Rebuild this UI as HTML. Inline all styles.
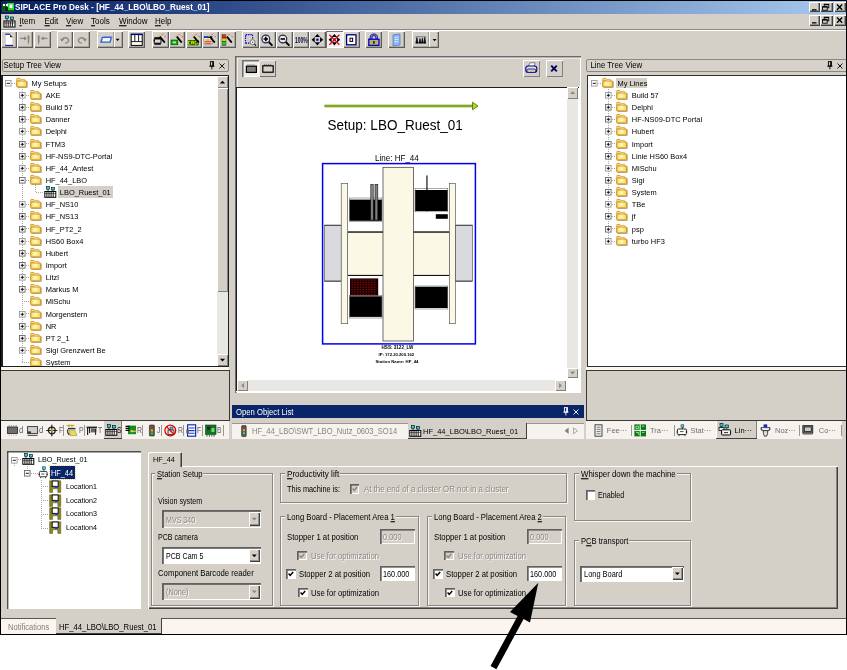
<!DOCTYPE html>
<html lang="en"><head><meta charset="utf-8"><title>SIPLACE Pro Desk</title><style>
html,body{margin:0;padding:0;background:#fff}
body{width:847px;height:670px;position:relative;overflow:hidden;font-family:"Liberation Sans",sans-serif}
#w div,#w span,#w svg{position:absolute;display:block}
#w span{white-space:nowrap}
#w svg{overflow:visible}
#w{will-change:transform;position:absolute;left:0;top:0;width:847px;height:670px}
u{text-decoration:underline;text-decoration-thickness:0.7px;text-underline-offset:1px}
</style></head><body><div id="w">
<div style="left:0px;top:0px;width:847px;height:635px;background:#000"></div>
<div style="left:1px;top:1px;width:845px;height:633px;background:#D4D0C8"></div>
<div style="left:1px;top:1px;width:845px;height:13px;background:linear-gradient(90deg,#0A246A 0%,#0A246A 4%,#A6CAF0 100%)"></div>
<svg style="left:2px;top:2px" width="12" height="11" viewBox="0 0 12 11"><rect x="0" y="2" width="12" height="8" fill="#0a5a2a"/><rect x="5" y="1" width="7" height="7" fill="#20e020"/><rect x="7.5" y="2.5" width="3" height="3.5" fill="#fff"/><rect x="1" y="2" width="2" height="2" fill="#fff"/><rect x="4" y="2" width="2" height="2" fill="#fff"/><rect x="3" y="5" width="3" height="4" fill="#222"/></svg>
<span style="left:15px;top:2.9px;font-size:8.25px;line-height:10px;color:#fff;font-weight:bold;transform:scaleY(1.08);transform-origin:0 55%">SIPLACE Pro Desk - [HF_44_LBO\LBO_Ruest_01]</span>
<div style="left:808.6px;top:1.5px;width:11.4px;height:10.6px;background:#D4D0C8;box-shadow:inset 1px 1px 0 #fff,inset -1px -1px 0 #404040,inset -2px -2px 0 #909090;"></div>
<svg style="left:808.6px;top:1.5px" width="11.5" height="10.5" viewBox="0 0 11.5 10.5"><rect x="3" y="7.2" width="4.5" height="1.3" fill="#000"/></svg>
<div style="left:820.4px;top:1.5px;width:12.2px;height:10.6px;background:#D4D0C8;box-shadow:inset 1px 1px 0 #fff,inset -1px -1px 0 #404040,inset -2px -2px 0 #909090;"></div>
<svg style="left:820.4px;top:1.5px" width="11.5" height="10.5" viewBox="0 0 11.5 10.5"><rect x="4.2" y="2.2" width="4.6" height="3.6" fill="none" stroke="#000" stroke-width="0.9"/><rect x="4.2" y="2" width="4.6" height="1.2" fill="#000"/><rect x="2.6" y="4.6" width="4.6" height="3.6" fill="#D4D0C8" stroke="#000" stroke-width="0.9"/><rect x="2.6" y="4.4" width="4.6" height="1.2" fill="#000"/></svg>
<div style="left:833.6px;top:1.5px;width:12px;height:10.6px;background:#D4D0C8;box-shadow:inset 1px 1px 0 #fff,inset -1px -1px 0 #404040,inset -2px -2px 0 #909090;"></div>
<svg style="left:833.6px;top:1.5px" width="11.5" height="10.5" viewBox="0 0 11.5 10.5"><path d="M3 2.6 L8.2 7.8 M8.2 2.6 L3 7.8" stroke="#000" stroke-width="1.4"/></svg>
<div style="left:808.6px;top:15.3px;width:11.4px;height:10.6px;background:#D4D0C8;box-shadow:inset 1px 1px 0 #fff,inset -1px -1px 0 #404040,inset -2px -2px 0 #909090;"></div>
<svg style="left:808.6px;top:15.3px" width="11.5" height="10.5" viewBox="0 0 11.5 10.5"><rect x="3" y="7.2" width="4.5" height="1.3" fill="#000"/></svg>
<div style="left:820.4px;top:15.3px;width:12.2px;height:10.6px;background:#D4D0C8;box-shadow:inset 1px 1px 0 #fff,inset -1px -1px 0 #404040,inset -2px -2px 0 #909090;"></div>
<svg style="left:820.4px;top:15.3px" width="11.5" height="10.5" viewBox="0 0 11.5 10.5"><rect x="4.2" y="2.2" width="4.6" height="3.6" fill="none" stroke="#000" stroke-width="0.9"/><rect x="4.2" y="2" width="4.6" height="1.2" fill="#000"/><rect x="2.6" y="4.6" width="4.6" height="3.6" fill="#D4D0C8" stroke="#000" stroke-width="0.9"/><rect x="2.6" y="4.4" width="4.6" height="1.2" fill="#000"/></svg>
<div style="left:833.6px;top:15.3px;width:12px;height:10.6px;background:#D4D0C8;box-shadow:inset 1px 1px 0 #fff,inset -1px -1px 0 #404040,inset -2px -2px 0 #909090;"></div>
<svg style="left:833.6px;top:15.3px" width="11.5" height="10.5" viewBox="0 0 11.5 10.5"><path d="M3 2.6 L8.2 7.8 M8.2 2.6 L3 7.8" stroke="#000" stroke-width="1.4"/></svg>
<svg style="left:3px;top:15px" width="13" height="13" viewBox="0 0 13 13"><rect x="2.5" y="1" width="3" height="2.6" fill="#20d8e8" stroke="#000" stroke-width="0.6"/><rect x="7.5" y="2" width="3" height="2.6" fill="#20d8e8" stroke="#000" stroke-width="0.6"/><path d="M4 3.6V6M9 4.6V6" stroke="#000" stroke-width="0.7"/><rect x="1" y="6" width="11" height="6" fill="#fff" stroke="#000" stroke-width="1"/><path d="M3.1 6.4v5.2M5.2 6.4v5.2M7.3 6.4v5.2M9.4 6.4v5.2" stroke="#000" stroke-width="0.9"/><path d="M1 8h11" stroke="#000" stroke-width="0.5"/></svg>
<span style="left:19.5px;top:17px;font-size:8px;line-height:10px;color:#000;;transform:scaleY(1.08);transform-origin:0 55%"><u>I</u>tem</span>
<span style="left:44.5px;top:17px;font-size:8px;line-height:10px;color:#000;;transform:scaleY(1.08);transform-origin:0 55%"><u>E</u>dit</span>
<span style="left:66px;top:17px;font-size:8px;line-height:10px;color:#000;;transform:scaleY(1.08);transform-origin:0 55%"><u>V</u>iew</span>
<span style="left:91px;top:17px;font-size:8px;line-height:10px;color:#000;;transform:scaleY(1.08);transform-origin:0 55%"><u>T</u>ools</span>
<span style="left:119px;top:17px;font-size:8px;line-height:10px;color:#000;;transform:scaleY(1.08);transform-origin:0 55%"><u>W</u>indow</span>
<span style="left:155px;top:17px;font-size:8px;line-height:10px;color:#000;;transform:scaleY(1.08);transform-origin:0 55%"><u>H</u>elp</span>
<div style="left:1px;top:29px;width:845px;height:1px;background:#8c8a84"></div>
<div style="left:1px;top:30px;width:845px;height:1px;background:#fff"></div>
<div style="left:0.8px;top:31.3px;width:16px;height:17px;background:#D4D0C8;box-shadow:inset 1px 1px 0 #fff,inset -1px -1px 0 #5a5a5a,inset -1.7px -1.7px 0 #a09c94"></div>
<svg style="left:0.8px;top:31.3px" width="16" height="17" viewBox="0 0 16 17"><path d="M4.4 3.4h4.6l2.8 2.8v8h-7.4z" fill="#fff" stroke="#bbb" stroke-width="0.5"/><path d="M9 3.4v2.8h2.8z" fill="#223"/><path d="M4.2 3.2h5" stroke="#0000a0" stroke-width="1"/><path d="M4.2 14.4h7.8" stroke="#0000a0" stroke-width="1"/></svg>
<div style="left:16.9px;top:31.3px;width:16.4px;height:17px;background:#D4D0C8;box-shadow:inset 1px 1px 0 #fff,inset -1px -1px 0 #5a5a5a,inset -1.7px -1.7px 0 #a09c94"></div>
<svg style="left:16.9px;top:31.3px" width="16.4" height="17" viewBox="0 0 16.4 17"><path d="M3.2 7.4h4.4" stroke="#8a8782" stroke-width="1.3"/><path d="M7 5.2L10 7.4L7 9.6z" fill="#8a8782"/><path d="M10.4 4.6h2v6l-0.8 3h-0.6z" fill="#8a8782"/></svg>
<div style="left:33.6px;top:31.3px;width:17px;height:17px;background:#D4D0C8;box-shadow:inset 1px 1px 0 #fff,inset -1px -1px 0 #5a5a5a,inset -1.7px -1.7px 0 #a09c94"></div>
<svg style="left:33.6px;top:31.3px" width="17" height="17" viewBox="0 0 17 17"><path d="M3.6 4.6h2v6l-0.8 3h-0.6z" fill="#8a8782"/><path d="M13.4 7.4H9" stroke="#8a8782" stroke-width="1.3"/><path d="M9.6 5.2L6.6 7.4L9.6 9.6z" fill="#8a8782"/></svg>
<div style="left:56.6px;top:31.3px;width:16.4px;height:17px;background:#D4D0C8;box-shadow:inset 1px 1px 0 #fff,inset -1px -1px 0 #5a5a5a,inset -1.7px -1.7px 0 #a09c94"></div>
<svg style="left:56.6px;top:31.3px" width="16.4" height="17" viewBox="0 0 16.4 17"><path d="M5 9.6a3.3 2.6 0 1 1 3.3 2.4" stroke="#8a8782" stroke-width="1.4" fill="none"/><path d="M3 7.4L4.8 10.8L7.2 8.2z" fill="#8a8782"/></svg>
<div style="left:73.3px;top:31.3px;width:16.8px;height:17px;background:#D4D0C8;box-shadow:inset 1px 1px 0 #fff,inset -1px -1px 0 #5a5a5a,inset -1.7px -1.7px 0 #a09c94"></div>
<svg style="left:73.3px;top:31.3px" width="16.8" height="17" viewBox="0 0 16.8 17"><path d="M12 9.6a3.3 2.6 0 1 0 -3.3 2.4" stroke="#8a8782" stroke-width="1.4" fill="none"/><path d="M14 7.4L12.2 10.8L9.8 8.2z" fill="#8a8782"/></svg>
<div style="left:96.8px;top:31.3px;width:25.8px;height:17px;background:#D4D0C8;box-shadow:inset 1px 1px 0 #fff,inset -1px -1px 0 #5a5a5a,inset -1.7px -1.7px 0 #a09c94"></div>
<div style="left:113.5px;top:32.3px;width:1px;height:15px;background:#fff"></div>
<div style="left:112.7px;top:32.3px;width:0.8px;height:15px;background:#a09c94"></div>
<svg style="left:96.8px;top:31.3px" width="25.8" height="17" viewBox="0 0 25.8 17"><path d="M5.4 6.4h9l-1.4 4.8h-9z" fill="#f4f6ff" stroke="#2a5ad0" stroke-width="1.3"/><path d="M7 5.6h8l-0.4 1.4" fill="none" stroke="#7a9ae8" stroke-width="0.9"/><path d="M18.6 7.8h4l-2 2.2z" fill="#000"/></svg>
<div style="left:128.4px;top:31.3px;width:17px;height:17px;background:#D4D0C8;box-shadow:inset 1px 1px 0 #fff,inset -1px -1px 0 #5a5a5a,inset -1.7px -1.7px 0 #a09c94"></div>
<svg style="left:128.4px;top:31.3px" width="17" height="17" viewBox="0 0 17 17"><rect x="3.2" y="3.4" width="11" height="11" fill="#fff" stroke="#000" stroke-width="1"/><rect x="2.7" y="2.6" width="12" height="1.5" fill="#000080"/><path d="M6.8 4v6.4M10.6 4v6.4M3.2 10.6h11" stroke="#000" stroke-width="0.9"/></svg>
<div style="left:151.8px;top:31.3px;width:16.85px;height:17px;background:#D4D0C8;box-shadow:inset 1px 1px 0 #fff,inset -1px -1px 0 #5a5a5a,inset -1.7px -1.7px 0 #a09c94"></div>
<svg style="left:151.8px;top:31.3px" width="16.85" height="17" viewBox="0 0 16.85 17"><rect x="2.4" y="6.2" width="6.4" height="1.8" fill="#000"/><path d="M2.2 8h6.8v4.2h-6.8z" fill="#d8d8d8" stroke="#000" stroke-width="0.9"/><path d="M1.8 9.4h1M2.4 13h6.4" stroke="#000" stroke-width="1.5"/><path d="M7.6 5.4L12.8 11.6" stroke="#000" stroke-width="1.7"/><path d="M6.8 4.4L7.8 5.6" stroke="#d8c800" stroke-width="1.5"/><circle cx="10" cy="3.6" r="0.55" fill="#e02020"/><circle cx="11.8" cy="2.6" r="0.45" fill="#e05050"/><circle cx="13.2" cy="5.8" r="0.55" fill="#e02020"/><circle cx="12" cy="4.4" r="0.45" fill="#e06060"/><circle cx="14" cy="3.4" r="0.4" fill="#e08080"/></svg>
<div style="left:168.65px;top:31.3px;width:16.85px;height:17px;background:#D4D0C8;box-shadow:inset 1px 1px 0 #fff,inset -1px -1px 0 #5a5a5a,inset -1.7px -1.7px 0 #a09c94"></div>
<svg style="left:168.65px;top:31.3px" width="16.85" height="17" viewBox="0 0 16.85 17"><rect x="2" y="9" width="6.8" height="4.8" fill="#00b400" stroke="#003c00" stroke-width="0.6"/><rect x="3.6" y="10.4" width="3.4" height="2" fill="#9ae89a"/><path d="M7.6 5.4L12.8 11.6" stroke="#000" stroke-width="1.7"/><path d="M6.8 4.4L7.8 5.6" stroke="#d8c800" stroke-width="1.5"/><circle cx="10" cy="3.6" r="0.55" fill="#e02020"/><circle cx="11.8" cy="2.6" r="0.45" fill="#e05050"/><circle cx="13.2" cy="5.8" r="0.55" fill="#e02020"/><circle cx="12" cy="4.4" r="0.45" fill="#e06060"/><circle cx="14" cy="3.4" r="0.4" fill="#e08080"/></svg>
<div style="left:185.5px;top:31.3px;width:16.85px;height:17px;background:#D4D0C8;box-shadow:inset 1px 1px 0 #fff,inset -1px -1px 0 #5a5a5a,inset -1.7px -1.7px 0 #a09c94"></div>
<svg style="left:185.5px;top:31.3px" width="16.85" height="17" viewBox="0 0 16.85 17"><rect x="1.8" y="9" width="10.8" height="5.4" fill="#0a5a0a"/><path d="M4.4 10.2h-2v3h2M5.6 13.2v-3h1.8v3M5.6 12h1.8M9 10.2v3h1.4q1.2 0 1.2-1.5t-1.2-1.5z" stroke="#e8e800" stroke-width="0.9" fill="none"/><path d="M7.6 5.4L12.8 11.6" stroke="#000" stroke-width="1.7"/><path d="M6.8 4.4L7.8 5.6" stroke="#d8c800" stroke-width="1.5"/><circle cx="10" cy="3.6" r="0.55" fill="#e02020"/><circle cx="11.8" cy="2.6" r="0.45" fill="#e05050"/><circle cx="13.2" cy="5.8" r="0.55" fill="#e02020"/><circle cx="12" cy="4.4" r="0.45" fill="#e06060"/><circle cx="14" cy="3.4" r="0.4" fill="#e08080"/></svg>
<div style="left:202.35px;top:31.3px;width:16.85px;height:17px;background:#D4D0C8;box-shadow:inset 1px 1px 0 #fff,inset -1px -1px 0 #5a5a5a,inset -1.7px -1.7px 0 #a09c94"></div>
<svg style="left:202.35px;top:31.3px" width="16.85" height="17" viewBox="0 0 16.85 17"><rect x="2" y="5.4" width="8.2" height="8" fill="#f4f4f4" stroke="#777" stroke-width="0.5"/><rect x="2" y="5.2" width="8.2" height="1.8" fill="#1030d0"/><rect x="2.6" y="8.4" width="7" height="1.3" fill="#e8c800"/><rect x="2.6" y="10.2" width="7" height="1.2" fill="#e03030"/><rect x="2.6" y="12" width="7" height="1" fill="#e06060"/><path d="M6 7v6.4" stroke="#888" stroke-width="0.5"/><path d="M7.6 5.4L12.8 11.6" stroke="#000" stroke-width="1.7"/><path d="M6.8 4.4L7.8 5.6" stroke="#d8c800" stroke-width="1.5"/><circle cx="10" cy="3.6" r="0.55" fill="#e02020"/><circle cx="11.8" cy="2.6" r="0.45" fill="#e05050"/><circle cx="13.2" cy="5.8" r="0.55" fill="#e02020"/><circle cx="12" cy="4.4" r="0.45" fill="#e06060"/><circle cx="14" cy="3.4" r="0.4" fill="#e08080"/></svg>
<div style="left:219.2px;top:31.3px;width:16.85px;height:17px;background:#D4D0C8;box-shadow:inset 1px 1px 0 #fff,inset -1px -1px 0 #5a5a5a,inset -1.7px -1.7px 0 #a09c94"></div>
<svg style="left:219.2px;top:31.3px" width="16.85" height="17" viewBox="0 0 16.85 17"><rect x="2.8" y="3.4" width="4.4" height="11.2" fill="#333"/><rect x="3.2" y="3.8" width="3.6" height="2.8" fill="#e02020"/><rect x="3.2" y="7.4" width="3.6" height="2.8" fill="#e8d800"/><rect x="3.2" y="11" width="3.6" height="2.8" fill="#20d020"/><path d="M7.6 5.4L12.8 11.6" stroke="#000" stroke-width="1.7"/><path d="M6.8 4.4L7.8 5.6" stroke="#d8c800" stroke-width="1.5"/><circle cx="10" cy="3.6" r="0.55" fill="#e02020"/><circle cx="11.8" cy="2.6" r="0.45" fill="#e05050"/><circle cx="13.2" cy="5.8" r="0.55" fill="#e02020"/><circle cx="12" cy="4.4" r="0.45" fill="#e06060"/><circle cx="14" cy="3.4" r="0.4" fill="#e08080"/></svg>
<div style="left:242px;top:31.3px;width:16.85px;height:17px;background:#D4D0C8;box-shadow:inset 1px 1px 0 #fff,inset -1px -1px 0 #5a5a5a,inset -1.7px -1.7px 0 #a09c94"></div>
<svg style="left:242px;top:31.3px" width="16.85" height="17" viewBox="0 0 16.85 17"><path d="M3.6 12.6V3.6H10.6V8" fill="none" stroke="#0000d0" stroke-width="1.1" stroke-dasharray="1.4 0.9"/><path d="M3.6 12.2H8" stroke="#0000d0" stroke-width="1.3" stroke-dasharray="1.4 0.9"/><circle cx="10.6" cy="11.2" r="2.5" fill="#f4f4f4" stroke="#555" stroke-width="0.8"/><path d="M10 10.2v2l1.6-1z" fill="#555"/><path d="M12.4 13L14 15" stroke="#222" stroke-width="1.2"/></svg>
<div style="left:258.85px;top:31.3px;width:16.85px;height:17px;background:#D4D0C8;box-shadow:inset 1px 1px 0 #fff,inset -1px -1px 0 #5a5a5a,inset -1.7px -1.7px 0 #a09c94"></div>
<svg style="left:258.85px;top:31.3px" width="16.85" height="17" viewBox="0 0 16.85 17"><circle cx="6.8" cy="8" r="3.9" fill="#e8e8e8" stroke="#282850" stroke-width="1.2"/><path d="M9.8 11L13.4 14.6" stroke="#000" stroke-width="1.9"/><path d="M4.6 8h4.4M6.8 5.8v4.4" stroke="#000" stroke-width="1.6"/></svg>
<div style="left:275.7px;top:31.3px;width:16.85px;height:17px;background:#D4D0C8;box-shadow:inset 1px 1px 0 #fff,inset -1px -1px 0 #5a5a5a,inset -1.7px -1.7px 0 #a09c94"></div>
<svg style="left:275.7px;top:31.3px" width="16.85" height="17" viewBox="0 0 16.85 17"><circle cx="6.8" cy="8" r="3.9" fill="#e8e8e8" stroke="#282850" stroke-width="1.2"/><path d="M9.8 11L13.4 14.6" stroke="#000" stroke-width="1.9"/><path d="M4.6 8h4.4" stroke="#000" stroke-width="1.6"/></svg>
<div style="left:292.55px;top:31.3px;width:16.85px;height:17px;background:#D4D0C8;box-shadow:inset 1px 1px 0 #fff,inset -1px -1px 0 #5a5a5a,inset -1.7px -1.7px 0 #a09c94"></div>
<svg style="left:292.55px;top:31.3px" width="16.85" height="17" viewBox="0 0 16.85 17"></svg>
<span style="left:295.15px;top:34.9px;font-size:8.6px;line-height:10px;font-weight:bold;color:#101048;transform:scaleX(0.58);transform-origin:0 0">100%</span>
<div style="left:309.4px;top:31.3px;width:16.85px;height:17px;background:#D4D0C8;box-shadow:inset 1px 1px 0 #fff,inset -1px -1px 0 #5a5a5a,inset -1.7px -1.7px 0 #a09c94"></div>
<svg style="left:309.4px;top:31.3px" width="16.85" height="17" viewBox="0 0 16.85 17"><path d="M8.4 3l2.7 3.1h-5.4zM8.4 14.4l2.7-3.1h-5.4zM2.6 8.7l3.1-2.7v5.4zM14.2 8.7l-3.1-2.7v5.4z" fill="#000"/><rect x="7.3" y="7.6" width="2.2" height="2.2" fill="#0000c0"/></svg>
<div style="left:326.25px;top:31.3px;width:16.85px;height:17px;background:#F2F0EC;box-shadow:inset 1px 1px 0 #707070,inset -1px -1px 0 #fff"></div>
<svg style="left:326.25px;top:31.3px" width="16.85" height="17" viewBox="0 0 16.85 17"><path d="M8.4 3l2.7 3.1h-5.4zM8.4 14.4l2.7-3.1h-5.4zM2.6 8.7l3.1-2.7v5.4zM14.2 8.7l-3.1-2.7v5.4z" fill="#000"/><rect x="7.3" y="7.6" width="2.2" height="2.2" fill="#0000c0"/><path d="M3.4 3.8L13.4 13.8M13.4 3.8L3.4 13.8" stroke="#e00020" stroke-width="1.3"/></svg>
<div style="left:343.1px;top:31.3px;width:16.85px;height:17px;background:#D4D0C8;box-shadow:inset 1px 1px 0 #fff,inset -1px -1px 0 #5a5a5a,inset -1.7px -1.7px 0 #a09c94"></div>
<svg style="left:343.1px;top:31.3px" width="16.85" height="17" viewBox="0 0 16.85 17"><rect x="3.6" y="3.8" width="9.4" height="10" fill="#fff" stroke="#000070" stroke-width="1.3"/><rect x="7" y="7.2" width="2.6" height="3.2" fill="none" stroke="#000" stroke-width="1"/></svg>
<div style="left:365px;top:31.3px;width:17.4px;height:17px;background:#D4D0C8;box-shadow:inset 1px 1px 0 #fff,inset -1px -1px 0 #5a5a5a,inset -1.7px -1.7px 0 #a09c94"></div>
<svg style="left:365px;top:31.3px" width="17.4" height="17" viewBox="0 0 17.4 17"><path d="M6 8.6V6.6a2.9 2.9 0 0 1 5.8 0V8.6" fill="none" stroke="#0000c8" stroke-width="2.6"/><path d="M6 8.6V6.6a2.9 2.9 0 0 1 5.8 0V8.6" fill="none" stroke="#8a8a8a" stroke-width="1.1"/><rect x="3.8" y="8.2" width="10.2" height="6.2" fill="#b8b068" stroke="#0000c8" stroke-width="1.3"/><rect x="8.1" y="10" width="1.6" height="2.8" fill="#222"/></svg>
<div style="left:388.4px;top:31.3px;width:17px;height:17px;background:#D4D0C8;box-shadow:inset 1px 1px 0 #fff,inset -1px -1px 0 #5a5a5a,inset -1.7px -1.7px 0 #a09c94"></div>
<svg style="left:388.4px;top:31.3px" width="17" height="17" viewBox="0 0 17 17"><path d="M5 3.8l7-0.8v11l-7 1z" fill="#8ab4f0" stroke="#5080d0" stroke-width="0.8"/><path d="M6.5 6.6l4-0.5M6.5 8.8l4-0.5M6.5 11l4-0.5" stroke="#e8f0ff" stroke-width="0.9"/></svg>
<div style="left:411.6px;top:31.3px;width:27.4px;height:17px;background:#D4D0C8;box-shadow:inset 1px 1px 0 #fff,inset -1px -1px 0 #5a5a5a,inset -1.7px -1.7px 0 #a09c94"></div>
<div style="left:429.2px;top:32.3px;width:1px;height:15px;background:#fff"></div>
<div style="left:428.4px;top:32.3px;width:0.8px;height:15px;background:#a09c94"></div>
<svg style="left:411.6px;top:31.3px" width="27.4" height="17" viewBox="0 0 27.4 17"><path d="M3.5 5.8h10.5" stroke="#7070a0" stroke-width="1"/><path d="M3.5 12h10.5" stroke="#333" stroke-width="1"/><path d="M4 12l0.9-5.4l0.9 5.4zM7.2 12l0.8-4.4l0.8 4.4zM9.6 12l0.8-5l0.8 5zM12 12l0.8-5.6l0.8 5.6z" stroke="#000" stroke-width="0.7" fill="#000"/><path d="M20.6 8h4l-2 2.2z" fill="#000"/></svg>
<div style="left:2px;top:58.5px;width:226.5px;height:13px;border:1px solid #8a8680;border-radius:2px;box-sizing:border-box;background:#D6D2CA"></div>
<span style="left:3.6px;top:60.7px;font-size:7.85px;line-height:10px;color:#000;;transform:scaleY(1.08);transform-origin:0 55%">Setup Tree View</span>
<svg style="left:208.6px;top:61px" width="6" height="9" viewBox="0 0 6 9"><rect x="1.4" y="0.6" width="3" height="4.4" fill="none" stroke="#000" stroke-width="0.9"/><rect x="3.2" y="0.6" width="1.2" height="4.4" fill="#000"/><path d="M0.3 5.2h5.2M2.9 5.2v3.2" stroke="#000" stroke-width="0.9"/></svg>
<svg style="left:219px;top:62.5px" width="6" height="6" viewBox="0 0 6 6"><path d="M0.5 0.5L5.5 5.5M5.5 0.5L0.5 5.5" stroke="#000" stroke-width="0.9"/></svg>
<div style="left:1px;top:74.5px;width:228px;height:292.5px;background:#202020"></div>
<div style="left:2.5px;top:75.5px;width:214px;height:290.5px;background:#fff;overflow:hidden"></div>
<div style="left:216.5px;top:75.5px;width:11px;height:290.5px;background:#E9E7E3"></div>
<div style="left:216.5px;top:75.5px;width:11px;height:12.5px;background:#D4D0C8;box-shadow:inset 1px 1px 0 #fff,inset -1px -1px 0 #808080;"></div>
<svg style="left:216.5px;top:75.5px" width="11" height="12.5" viewBox="0 0 11 12.5"><path d="M2.9 7.55h5.2l-2.6 -2.8z" fill="#000"/></svg>
<div style="left:216.5px;top:88.3px;width:11px;height:203.3px;background:#D4D0C8;box-shadow:inset 1px 1px 0 #fff,inset -1px -1px 0 #808080;"></div>
<div style="left:216.5px;top:353.8px;width:11px;height:12.2px;background:#D4D0C8;box-shadow:inset 1px 1px 0 #fff,inset -1px -1px 0 #808080;"></div>
<svg style="left:216.5px;top:353.8px" width="11" height="12.2" viewBox="0 0 11 12.2"><path d="M2.9 4.8h5.2l-2.6 2.8z" fill="#000"/></svg>
<div style="left:1px;top:367px;width:228px;height:2.6px;background:#FAF8EA"></div>
<div style="left:1px;top:369.8px;width:228.6px;height:51.4px;background:#3a3a3a"></div>
<div style="left:1px;top:370.8px;width:227.6px;height:49.4px;background:#D4D0C8"></div>
<div style="left:2.5px;top:75.5px;width:214px;height:290.5px;overflow:hidden"><div style="left:-2.5px;top:-75.5px;width:0;height:0">
<div style="left:22px;top:89px;width:1px;height:273px;background:repeating-linear-gradient(180deg,#a8a8a8 0 1px,transparent 1px 2px)"></div>
<div style="left:12px;top:83px;width:4px;height:1px;background:repeating-linear-gradient(90deg,#a8a8a8 0 1px,transparent 1px 2px)"></div>
<svg style="left:4.9px;top:79.9px" width="6.6" height="6.6" viewBox="0 0 6.6 6.6"><rect x="0.5" y="0.5" width="5.6" height="5.6" fill="#fff" stroke="#9a9a9a" stroke-width="0.9"/><path d="M1.7 3.3h3.2" stroke="#000" stroke-width="0.9"/></svg>
<svg style="left:15.9px;top:77.9px" width="12" height="11" viewBox="0 0 12 11"><path d="M11.3 3.6V9.5H1.4" fill="none" stroke="#6e6a70" stroke-width="0.6" opacity="0.8"/><path d="M0.7 3V0.9Q0.7 0.4 1.2 0.4H3.6Q4 0.4 4.1 0.8L4.3 1.4H8.3Q8.8 1.4 8.8 1.9V3z" fill="#FBE48E" stroke="#D29A2C" stroke-width="0.7"/><rect x="0.9" y="0.3" width="2.9" height="0.8" fill="#D89A28"/><rect x="4.6" y="2" width="3.9" height="1" fill="#fff"/><rect x="0.7" y="3" width="10" height="6" rx="0.7" fill="#F9D75E" stroke="#C98C1E" stroke-width="1"/><rect x="2.2" y="3.8" width="6.4" height="4" fill="#FDE888"/><rect x="3.4" y="3.8" width="3.6" height="3.6" fill="#FFF4B0"/></svg>
<span style="left:31.5px;top:78.9px;font-size:7.45px;line-height:10px;color:#000;;transform:scaleY(1.08);transform-origin:0 55%">My Setups</span>
<div style="left:22px;top:95px;width:8px;height:1px;background:repeating-linear-gradient(90deg,#a8a8a8 0 1px,transparent 1px 2px)"></div>
<svg style="left:18.7px;top:92.04px" width="6.6" height="6.6" viewBox="0 0 6.6 6.6"><rect x="0.5" y="0.5" width="5.6" height="5.6" fill="#fff" stroke="#9a9a9a" stroke-width="0.9"/><path d="M1.7 3.3h3.2" stroke="#000" stroke-width="0.9"/><path d="M3.3 1.7v3.2" stroke="#000" stroke-width="0.9"/></svg>
<svg style="left:30px;top:90.04px" width="12" height="11" viewBox="0 0 12 11"><path d="M11.3 3.6V9.5H1.4" fill="none" stroke="#6e6a70" stroke-width="0.6" opacity="0.8"/><path d="M0.7 3V0.9Q0.7 0.4 1.2 0.4H3.6Q4 0.4 4.1 0.8L4.3 1.4H8.3Q8.8 1.4 8.8 1.9V3z" fill="#FBE48E" stroke="#D29A2C" stroke-width="0.7"/><rect x="0.9" y="0.3" width="2.9" height="0.8" fill="#D89A28"/><rect x="4.6" y="2" width="3.9" height="1" fill="#fff"/><rect x="0.7" y="3" width="10" height="6" rx="0.7" fill="#F9D75E" stroke="#C98C1E" stroke-width="1"/><rect x="2.2" y="3.8" width="6.4" height="4" fill="#FDE888"/><rect x="3.4" y="3.8" width="3.6" height="3.6" fill="#FFF4B0"/></svg>
<span style="left:45.7px;top:91.04px;font-size:7.45px;line-height:10px;color:#000;;transform:scaleY(1.08);transform-origin:0 55%">AKE</span>
<div style="left:22px;top:107px;width:8px;height:1px;background:repeating-linear-gradient(90deg,#a8a8a8 0 1px,transparent 1px 2px)"></div>
<svg style="left:18.7px;top:104.18px" width="6.6" height="6.6" viewBox="0 0 6.6 6.6"><rect x="0.5" y="0.5" width="5.6" height="5.6" fill="#fff" stroke="#6a6a6a" stroke-width="0.9"/><path d="M1.7 3.3h3.2" stroke="#000" stroke-width="0.9"/><path d="M3.3 1.7v3.2" stroke="#000" stroke-width="0.9"/></svg>
<svg style="left:30px;top:102.18px" width="12" height="11" viewBox="0 0 12 11"><path d="M11.3 3.6V9.5H1.4" fill="none" stroke="#6e6a70" stroke-width="0.6" opacity="0.8"/><path d="M0.7 3V0.9Q0.7 0.4 1.2 0.4H3.6Q4 0.4 4.1 0.8L4.3 1.4H8.3Q8.8 1.4 8.8 1.9V3z" fill="#FBE48E" stroke="#D29A2C" stroke-width="0.7"/><rect x="0.9" y="0.3" width="2.9" height="0.8" fill="#D89A28"/><rect x="4.6" y="2" width="3.9" height="1" fill="#fff"/><rect x="0.7" y="3" width="10" height="6" rx="0.7" fill="#F9D75E" stroke="#C98C1E" stroke-width="1"/><rect x="2.2" y="3.8" width="6.4" height="4" fill="#FDE888"/><rect x="3.4" y="3.8" width="3.6" height="3.6" fill="#FFF4B0"/></svg>
<span style="left:45.7px;top:103.18px;font-size:7.45px;line-height:10px;color:#000;;transform:scaleY(1.08);transform-origin:0 55%">Build 57</span>
<div style="left:22px;top:119px;width:8px;height:1px;background:repeating-linear-gradient(90deg,#a8a8a8 0 1px,transparent 1px 2px)"></div>
<svg style="left:18.7px;top:116.32px" width="6.6" height="6.6" viewBox="0 0 6.6 6.6"><rect x="0.5" y="0.5" width="5.6" height="5.6" fill="#fff" stroke="#6a6a6a" stroke-width="0.9"/><path d="M1.7 3.3h3.2" stroke="#000" stroke-width="0.9"/><path d="M3.3 1.7v3.2" stroke="#000" stroke-width="0.9"/></svg>
<svg style="left:30px;top:114.32px" width="12" height="11" viewBox="0 0 12 11"><path d="M11.3 3.6V9.5H1.4" fill="none" stroke="#6e6a70" stroke-width="0.6" opacity="0.8"/><path d="M0.7 3V0.9Q0.7 0.4 1.2 0.4H3.6Q4 0.4 4.1 0.8L4.3 1.4H8.3Q8.8 1.4 8.8 1.9V3z" fill="#FBE48E" stroke="#D29A2C" stroke-width="0.7"/><rect x="0.9" y="0.3" width="2.9" height="0.8" fill="#D89A28"/><rect x="4.6" y="2" width="3.9" height="1" fill="#fff"/><rect x="0.7" y="3" width="10" height="6" rx="0.7" fill="#F9D75E" stroke="#C98C1E" stroke-width="1"/><rect x="2.2" y="3.8" width="6.4" height="4" fill="#FDE888"/><rect x="3.4" y="3.8" width="3.6" height="3.6" fill="#FFF4B0"/></svg>
<span style="left:45.7px;top:115.32px;font-size:7.45px;line-height:10px;color:#000;;transform:scaleY(1.08);transform-origin:0 55%">Danner</span>
<div style="left:22px;top:131px;width:8px;height:1px;background:repeating-linear-gradient(90deg,#a8a8a8 0 1px,transparent 1px 2px)"></div>
<svg style="left:18.7px;top:128.46px" width="6.6" height="6.6" viewBox="0 0 6.6 6.6"><rect x="0.5" y="0.5" width="5.6" height="5.6" fill="#fff" stroke="#9a9a9a" stroke-width="0.9"/><path d="M1.7 3.3h3.2" stroke="#000" stroke-width="0.9"/><path d="M3.3 1.7v3.2" stroke="#000" stroke-width="0.9"/></svg>
<svg style="left:30px;top:126.46px" width="12" height="11" viewBox="0 0 12 11"><path d="M11.3 3.6V9.5H1.4" fill="none" stroke="#6e6a70" stroke-width="0.6" opacity="0.8"/><path d="M0.7 3V0.9Q0.7 0.4 1.2 0.4H3.6Q4 0.4 4.1 0.8L4.3 1.4H8.3Q8.8 1.4 8.8 1.9V3z" fill="#FBE48E" stroke="#D29A2C" stroke-width="0.7"/><rect x="0.9" y="0.3" width="2.9" height="0.8" fill="#D89A28"/><rect x="4.6" y="2" width="3.9" height="1" fill="#fff"/><rect x="0.7" y="3" width="10" height="6" rx="0.7" fill="#F9D75E" stroke="#C98C1E" stroke-width="1"/><rect x="2.2" y="3.8" width="6.4" height="4" fill="#FDE888"/><rect x="3.4" y="3.8" width="3.6" height="3.6" fill="#FFF4B0"/></svg>
<span style="left:45.7px;top:127.46px;font-size:7.45px;line-height:10px;color:#000;;transform:scaleY(1.08);transform-origin:0 55%">Delphi</span>
<div style="left:22px;top:143px;width:8px;height:1px;background:repeating-linear-gradient(90deg,#a8a8a8 0 1px,transparent 1px 2px)"></div>
<svg style="left:18.7px;top:140.6px" width="6.6" height="6.6" viewBox="0 0 6.6 6.6"><rect x="0.5" y="0.5" width="5.6" height="5.6" fill="#fff" stroke="#6a6a6a" stroke-width="0.9"/><path d="M1.7 3.3h3.2" stroke="#000" stroke-width="0.9"/><path d="M3.3 1.7v3.2" stroke="#000" stroke-width="0.9"/></svg>
<svg style="left:30px;top:138.6px" width="12" height="11" viewBox="0 0 12 11"><path d="M11.3 3.6V9.5H1.4" fill="none" stroke="#6e6a70" stroke-width="0.6" opacity="0.8"/><path d="M0.7 3V0.9Q0.7 0.4 1.2 0.4H3.6Q4 0.4 4.1 0.8L4.3 1.4H8.3Q8.8 1.4 8.8 1.9V3z" fill="#FBE48E" stroke="#D29A2C" stroke-width="0.7"/><rect x="0.9" y="0.3" width="2.9" height="0.8" fill="#D89A28"/><rect x="4.6" y="2" width="3.9" height="1" fill="#fff"/><rect x="0.7" y="3" width="10" height="6" rx="0.7" fill="#F9D75E" stroke="#C98C1E" stroke-width="1"/><rect x="2.2" y="3.8" width="6.4" height="4" fill="#FDE888"/><rect x="3.4" y="3.8" width="3.6" height="3.6" fill="#FFF4B0"/></svg>
<span style="left:45.7px;top:139.6px;font-size:7.45px;line-height:10px;color:#000;;transform:scaleY(1.08);transform-origin:0 55%">FTM3</span>
<div style="left:22px;top:156px;width:8px;height:1px;background:repeating-linear-gradient(90deg,#a8a8a8 0 1px,transparent 1px 2px)"></div>
<svg style="left:18.7px;top:152.74px" width="6.6" height="6.6" viewBox="0 0 6.6 6.6"><rect x="0.5" y="0.5" width="5.6" height="5.6" fill="#fff" stroke="#6a6a6a" stroke-width="0.9"/><path d="M1.7 3.3h3.2" stroke="#000" stroke-width="0.9"/><path d="M3.3 1.7v3.2" stroke="#000" stroke-width="0.9"/></svg>
<svg style="left:30px;top:150.74px" width="12" height="11" viewBox="0 0 12 11"><path d="M11.3 3.6V9.5H1.4" fill="none" stroke="#6e6a70" stroke-width="0.6" opacity="0.8"/><path d="M0.7 3V0.9Q0.7 0.4 1.2 0.4H3.6Q4 0.4 4.1 0.8L4.3 1.4H8.3Q8.8 1.4 8.8 1.9V3z" fill="#FBE48E" stroke="#D29A2C" stroke-width="0.7"/><rect x="0.9" y="0.3" width="2.9" height="0.8" fill="#D89A28"/><rect x="4.6" y="2" width="3.9" height="1" fill="#fff"/><rect x="0.7" y="3" width="10" height="6" rx="0.7" fill="#F9D75E" stroke="#C98C1E" stroke-width="1"/><rect x="2.2" y="3.8" width="6.4" height="4" fill="#FDE888"/><rect x="3.4" y="3.8" width="3.6" height="3.6" fill="#FFF4B0"/></svg>
<span style="left:45.7px;top:151.74px;font-size:7.45px;line-height:10px;color:#000;;transform:scaleY(1.08);transform-origin:0 55%">HF-NS9-DTC-Portal</span>
<div style="left:22px;top:168px;width:8px;height:1px;background:repeating-linear-gradient(90deg,#a8a8a8 0 1px,transparent 1px 2px)"></div>
<svg style="left:18.7px;top:164.88px" width="6.6" height="6.6" viewBox="0 0 6.6 6.6"><rect x="0.5" y="0.5" width="5.6" height="5.6" fill="#fff" stroke="#9a9a9a" stroke-width="0.9"/><path d="M1.7 3.3h3.2" stroke="#000" stroke-width="0.9"/><path d="M3.3 1.7v3.2" stroke="#000" stroke-width="0.9"/></svg>
<svg style="left:30px;top:162.88px" width="12" height="11" viewBox="0 0 12 11"><path d="M11.3 3.6V9.5H1.4" fill="none" stroke="#6e6a70" stroke-width="0.6" opacity="0.8"/><path d="M0.7 3V0.9Q0.7 0.4 1.2 0.4H3.6Q4 0.4 4.1 0.8L4.3 1.4H8.3Q8.8 1.4 8.8 1.9V3z" fill="#FBE48E" stroke="#D29A2C" stroke-width="0.7"/><rect x="0.9" y="0.3" width="2.9" height="0.8" fill="#D89A28"/><rect x="4.6" y="2" width="3.9" height="1" fill="#fff"/><rect x="0.7" y="3" width="10" height="6" rx="0.7" fill="#F9D75E" stroke="#C98C1E" stroke-width="1"/><rect x="2.2" y="3.8" width="6.4" height="4" fill="#FDE888"/><rect x="3.4" y="3.8" width="3.6" height="3.6" fill="#FFF4B0"/></svg>
<span style="left:45.7px;top:163.88px;font-size:7.45px;line-height:10px;color:#000;;transform:scaleY(1.08);transform-origin:0 55%">HF_44_Antest</span>
<div style="left:22px;top:180px;width:8px;height:1px;background:repeating-linear-gradient(90deg,#a8a8a8 0 1px,transparent 1px 2px)"></div>
<svg style="left:18.7px;top:177.02px" width="6.6" height="6.6" viewBox="0 0 6.6 6.6"><rect x="0.5" y="0.5" width="5.6" height="5.6" fill="#fff" stroke="#6a6a6a" stroke-width="0.9"/><path d="M1.7 3.3h3.2" stroke="#000" stroke-width="0.9"/></svg>
<svg style="left:30px;top:175.02px" width="12" height="11" viewBox="0 0 12 11"><path d="M11.3 3.6V9.5H1.4" fill="none" stroke="#6e6a70" stroke-width="0.6" opacity="0.8"/><path d="M0.7 3V0.9Q0.7 0.4 1.2 0.4H3.6Q4 0.4 4.1 0.8L4.3 1.4H8.3Q8.8 1.4 8.8 1.9V3z" fill="#FBE48E" stroke="#D29A2C" stroke-width="0.7"/><rect x="0.9" y="0.3" width="2.9" height="0.8" fill="#D89A28"/><rect x="4.6" y="2" width="3.9" height="1" fill="#fff"/><rect x="0.7" y="3" width="10" height="6" rx="0.7" fill="#F9D75E" stroke="#C98C1E" stroke-width="1"/><rect x="2.2" y="3.8" width="6.4" height="4" fill="#FDE888"/><rect x="3.4" y="3.8" width="3.6" height="3.6" fill="#FFF4B0"/></svg>
<span style="left:45.7px;top:176.02px;font-size:7.45px;line-height:10px;color:#000;;transform:scaleY(1.08);transform-origin:0 55%">HF_44_LBO</span>
<div style="left:35px;top:185px;width:1px;height:7px;background:repeating-linear-gradient(180deg,#a8a8a8 0 1px,transparent 1px 2px)"></div>
<div style="left:36px;top:192px;width:7px;height:1px;background:repeating-linear-gradient(90deg,#a8a8a8 0 1px,transparent 1px 2px)"></div>
<svg style="left:43.8px;top:185.96px" width="12.5" height="12" viewBox="0 0 12.5 12"><rect x="2.6" y="0.6" width="3" height="2.6" fill="#20d8e8" stroke="#000" stroke-width="0.6"/><rect x="7.4" y="1.4" width="3" height="2.6" fill="#20d8e8" stroke="#000" stroke-width="0.6"/><path d="M4 3.2V5.5M9 4V5.5" stroke="#000" stroke-width="0.7"/><rect x="0.8" y="5.5" width="11" height="5.8" fill="#fff" stroke="#000" stroke-width="1"/><path d="M2.9 6v5M5 6v5M7.1 6v5M9.2 6v5" stroke="#000" stroke-width="0.9"/><path d="M1 7.6h10.6" stroke="#000" stroke-width="0.5"/></svg>
<div style="left:58px;top:185.86px;width:54.7px;height:11.8px;background:#D4D0C8"></div>
<span style="left:59.8px;top:188.16px;font-size:7.45px;line-height:10px;color:#000;;transform:scaleY(1.08);transform-origin:0 55%">LBO_Ruest_01</span>
<div style="left:22px;top:204px;width:8px;height:1px;background:repeating-linear-gradient(90deg,#a8a8a8 0 1px,transparent 1px 2px)"></div>
<svg style="left:18.7px;top:201.3px" width="6.6" height="6.6" viewBox="0 0 6.6 6.6"><rect x="0.5" y="0.5" width="5.6" height="5.6" fill="#fff" stroke="#9a9a9a" stroke-width="0.9"/><path d="M1.7 3.3h3.2" stroke="#000" stroke-width="0.9"/><path d="M3.3 1.7v3.2" stroke="#000" stroke-width="0.9"/></svg>
<svg style="left:30px;top:199.3px" width="12" height="11" viewBox="0 0 12 11"><path d="M11.3 3.6V9.5H1.4" fill="none" stroke="#6e6a70" stroke-width="0.6" opacity="0.8"/><path d="M0.7 3V0.9Q0.7 0.4 1.2 0.4H3.6Q4 0.4 4.1 0.8L4.3 1.4H8.3Q8.8 1.4 8.8 1.9V3z" fill="#FBE48E" stroke="#D29A2C" stroke-width="0.7"/><rect x="0.9" y="0.3" width="2.9" height="0.8" fill="#D89A28"/><rect x="4.6" y="2" width="3.9" height="1" fill="#fff"/><rect x="0.7" y="3" width="10" height="6" rx="0.7" fill="#F9D75E" stroke="#C98C1E" stroke-width="1"/><rect x="2.2" y="3.8" width="6.4" height="4" fill="#FDE888"/><rect x="3.4" y="3.8" width="3.6" height="3.6" fill="#FFF4B0"/></svg>
<span style="left:45.7px;top:200.3px;font-size:7.45px;line-height:10px;color:#000;;transform:scaleY(1.08);transform-origin:0 55%">HF_NS10</span>
<div style="left:22px;top:216px;width:8px;height:1px;background:repeating-linear-gradient(90deg,#a8a8a8 0 1px,transparent 1px 2px)"></div>
<svg style="left:18.7px;top:213.44px" width="6.6" height="6.6" viewBox="0 0 6.6 6.6"><rect x="0.5" y="0.5" width="5.6" height="5.6" fill="#fff" stroke="#6a6a6a" stroke-width="0.9"/><path d="M1.7 3.3h3.2" stroke="#000" stroke-width="0.9"/><path d="M3.3 1.7v3.2" stroke="#000" stroke-width="0.9"/></svg>
<svg style="left:30px;top:211.44px" width="12" height="11" viewBox="0 0 12 11"><path d="M11.3 3.6V9.5H1.4" fill="none" stroke="#6e6a70" stroke-width="0.6" opacity="0.8"/><path d="M0.7 3V0.9Q0.7 0.4 1.2 0.4H3.6Q4 0.4 4.1 0.8L4.3 1.4H8.3Q8.8 1.4 8.8 1.9V3z" fill="#FBE48E" stroke="#D29A2C" stroke-width="0.7"/><rect x="0.9" y="0.3" width="2.9" height="0.8" fill="#D89A28"/><rect x="4.6" y="2" width="3.9" height="1" fill="#fff"/><rect x="0.7" y="3" width="10" height="6" rx="0.7" fill="#F9D75E" stroke="#C98C1E" stroke-width="1"/><rect x="2.2" y="3.8" width="6.4" height="4" fill="#FDE888"/><rect x="3.4" y="3.8" width="3.6" height="3.6" fill="#FFF4B0"/></svg>
<span style="left:45.7px;top:212.44px;font-size:7.45px;line-height:10px;color:#000;;transform:scaleY(1.08);transform-origin:0 55%">HF_NS13</span>
<div style="left:22px;top:228px;width:8px;height:1px;background:repeating-linear-gradient(90deg,#a8a8a8 0 1px,transparent 1px 2px)"></div>
<svg style="left:18.7px;top:225.58px" width="6.6" height="6.6" viewBox="0 0 6.6 6.6"><rect x="0.5" y="0.5" width="5.6" height="5.6" fill="#fff" stroke="#6a6a6a" stroke-width="0.9"/><path d="M1.7 3.3h3.2" stroke="#000" stroke-width="0.9"/><path d="M3.3 1.7v3.2" stroke="#000" stroke-width="0.9"/></svg>
<svg style="left:30px;top:223.58px" width="12" height="11" viewBox="0 0 12 11"><path d="M11.3 3.6V9.5H1.4" fill="none" stroke="#6e6a70" stroke-width="0.6" opacity="0.8"/><path d="M0.7 3V0.9Q0.7 0.4 1.2 0.4H3.6Q4 0.4 4.1 0.8L4.3 1.4H8.3Q8.8 1.4 8.8 1.9V3z" fill="#FBE48E" stroke="#D29A2C" stroke-width="0.7"/><rect x="0.9" y="0.3" width="2.9" height="0.8" fill="#D89A28"/><rect x="4.6" y="2" width="3.9" height="1" fill="#fff"/><rect x="0.7" y="3" width="10" height="6" rx="0.7" fill="#F9D75E" stroke="#C98C1E" stroke-width="1"/><rect x="2.2" y="3.8" width="6.4" height="4" fill="#FDE888"/><rect x="3.4" y="3.8" width="3.6" height="3.6" fill="#FFF4B0"/></svg>
<span style="left:45.7px;top:224.58px;font-size:7.45px;line-height:10px;color:#000;;transform:scaleY(1.08);transform-origin:0 55%">HF_PT2_2</span>
<div style="left:22px;top:241px;width:8px;height:1px;background:repeating-linear-gradient(90deg,#a8a8a8 0 1px,transparent 1px 2px)"></div>
<svg style="left:18.7px;top:237.72px" width="6.6" height="6.6" viewBox="0 0 6.6 6.6"><rect x="0.5" y="0.5" width="5.6" height="5.6" fill="#fff" stroke="#9a9a9a" stroke-width="0.9"/><path d="M1.7 3.3h3.2" stroke="#000" stroke-width="0.9"/><path d="M3.3 1.7v3.2" stroke="#000" stroke-width="0.9"/></svg>
<svg style="left:30px;top:235.72px" width="12" height="11" viewBox="0 0 12 11"><path d="M11.3 3.6V9.5H1.4" fill="none" stroke="#6e6a70" stroke-width="0.6" opacity="0.8"/><path d="M0.7 3V0.9Q0.7 0.4 1.2 0.4H3.6Q4 0.4 4.1 0.8L4.3 1.4H8.3Q8.8 1.4 8.8 1.9V3z" fill="#FBE48E" stroke="#D29A2C" stroke-width="0.7"/><rect x="0.9" y="0.3" width="2.9" height="0.8" fill="#D89A28"/><rect x="4.6" y="2" width="3.9" height="1" fill="#fff"/><rect x="0.7" y="3" width="10" height="6" rx="0.7" fill="#F9D75E" stroke="#C98C1E" stroke-width="1"/><rect x="2.2" y="3.8" width="6.4" height="4" fill="#FDE888"/><rect x="3.4" y="3.8" width="3.6" height="3.6" fill="#FFF4B0"/></svg>
<span style="left:45.7px;top:236.72px;font-size:7.45px;line-height:10px;color:#000;;transform:scaleY(1.08);transform-origin:0 55%">HS60 Box4</span>
<div style="left:22px;top:253px;width:8px;height:1px;background:repeating-linear-gradient(90deg,#a8a8a8 0 1px,transparent 1px 2px)"></div>
<svg style="left:18.7px;top:249.86px" width="6.6" height="6.6" viewBox="0 0 6.6 6.6"><rect x="0.5" y="0.5" width="5.6" height="5.6" fill="#fff" stroke="#6a6a6a" stroke-width="0.9"/><path d="M1.7 3.3h3.2" stroke="#000" stroke-width="0.9"/><path d="M3.3 1.7v3.2" stroke="#000" stroke-width="0.9"/></svg>
<svg style="left:30px;top:247.86px" width="12" height="11" viewBox="0 0 12 11"><path d="M11.3 3.6V9.5H1.4" fill="none" stroke="#6e6a70" stroke-width="0.6" opacity="0.8"/><path d="M0.7 3V0.9Q0.7 0.4 1.2 0.4H3.6Q4 0.4 4.1 0.8L4.3 1.4H8.3Q8.8 1.4 8.8 1.9V3z" fill="#FBE48E" stroke="#D29A2C" stroke-width="0.7"/><rect x="0.9" y="0.3" width="2.9" height="0.8" fill="#D89A28"/><rect x="4.6" y="2" width="3.9" height="1" fill="#fff"/><rect x="0.7" y="3" width="10" height="6" rx="0.7" fill="#F9D75E" stroke="#C98C1E" stroke-width="1"/><rect x="2.2" y="3.8" width="6.4" height="4" fill="#FDE888"/><rect x="3.4" y="3.8" width="3.6" height="3.6" fill="#FFF4B0"/></svg>
<span style="left:45.7px;top:248.86px;font-size:7.45px;line-height:10px;color:#000;;transform:scaleY(1.08);transform-origin:0 55%">Hubert</span>
<div style="left:22px;top:265px;width:8px;height:1px;background:repeating-linear-gradient(90deg,#a8a8a8 0 1px,transparent 1px 2px)"></div>
<svg style="left:18.7px;top:262px" width="6.6" height="6.6" viewBox="0 0 6.6 6.6"><rect x="0.5" y="0.5" width="5.6" height="5.6" fill="#fff" stroke="#6a6a6a" stroke-width="0.9"/><path d="M1.7 3.3h3.2" stroke="#000" stroke-width="0.9"/><path d="M3.3 1.7v3.2" stroke="#000" stroke-width="0.9"/></svg>
<svg style="left:30px;top:260px" width="12" height="11" viewBox="0 0 12 11"><path d="M11.3 3.6V9.5H1.4" fill="none" stroke="#6e6a70" stroke-width="0.6" opacity="0.8"/><path d="M0.7 3V0.9Q0.7 0.4 1.2 0.4H3.6Q4 0.4 4.1 0.8L4.3 1.4H8.3Q8.8 1.4 8.8 1.9V3z" fill="#FBE48E" stroke="#D29A2C" stroke-width="0.7"/><rect x="0.9" y="0.3" width="2.9" height="0.8" fill="#D89A28"/><rect x="4.6" y="2" width="3.9" height="1" fill="#fff"/><rect x="0.7" y="3" width="10" height="6" rx="0.7" fill="#F9D75E" stroke="#C98C1E" stroke-width="1"/><rect x="2.2" y="3.8" width="6.4" height="4" fill="#FDE888"/><rect x="3.4" y="3.8" width="3.6" height="3.6" fill="#FFF4B0"/></svg>
<span style="left:45.7px;top:261px;font-size:7.45px;line-height:10px;color:#000;;transform:scaleY(1.08);transform-origin:0 55%">Import</span>
<div style="left:22px;top:277px;width:8px;height:1px;background:repeating-linear-gradient(90deg,#a8a8a8 0 1px,transparent 1px 2px)"></div>
<svg style="left:18.7px;top:274.14px" width="6.6" height="6.6" viewBox="0 0 6.6 6.6"><rect x="0.5" y="0.5" width="5.6" height="5.6" fill="#fff" stroke="#9a9a9a" stroke-width="0.9"/><path d="M1.7 3.3h3.2" stroke="#000" stroke-width="0.9"/><path d="M3.3 1.7v3.2" stroke="#000" stroke-width="0.9"/></svg>
<svg style="left:30px;top:272.14px" width="12" height="11" viewBox="0 0 12 11"><path d="M11.3 3.6V9.5H1.4" fill="none" stroke="#6e6a70" stroke-width="0.6" opacity="0.8"/><path d="M0.7 3V0.9Q0.7 0.4 1.2 0.4H3.6Q4 0.4 4.1 0.8L4.3 1.4H8.3Q8.8 1.4 8.8 1.9V3z" fill="#FBE48E" stroke="#D29A2C" stroke-width="0.7"/><rect x="0.9" y="0.3" width="2.9" height="0.8" fill="#D89A28"/><rect x="4.6" y="2" width="3.9" height="1" fill="#fff"/><rect x="0.7" y="3" width="10" height="6" rx="0.7" fill="#F9D75E" stroke="#C98C1E" stroke-width="1"/><rect x="2.2" y="3.8" width="6.4" height="4" fill="#FDE888"/><rect x="3.4" y="3.8" width="3.6" height="3.6" fill="#FFF4B0"/></svg>
<span style="left:45.7px;top:273.14px;font-size:7.45px;line-height:10px;color:#000;;transform:scaleY(1.08);transform-origin:0 55%">Litzl</span>
<div style="left:22px;top:289px;width:8px;height:1px;background:repeating-linear-gradient(90deg,#a8a8a8 0 1px,transparent 1px 2px)"></div>
<svg style="left:18.7px;top:286.28px" width="6.6" height="6.6" viewBox="0 0 6.6 6.6"><rect x="0.5" y="0.5" width="5.6" height="5.6" fill="#fff" stroke="#6a6a6a" stroke-width="0.9"/><path d="M1.7 3.3h3.2" stroke="#000" stroke-width="0.9"/><path d="M3.3 1.7v3.2" stroke="#000" stroke-width="0.9"/></svg>
<svg style="left:30px;top:284.28px" width="12" height="11" viewBox="0 0 12 11"><path d="M11.3 3.6V9.5H1.4" fill="none" stroke="#6e6a70" stroke-width="0.6" opacity="0.8"/><path d="M0.7 3V0.9Q0.7 0.4 1.2 0.4H3.6Q4 0.4 4.1 0.8L4.3 1.4H8.3Q8.8 1.4 8.8 1.9V3z" fill="#FBE48E" stroke="#D29A2C" stroke-width="0.7"/><rect x="0.9" y="0.3" width="2.9" height="0.8" fill="#D89A28"/><rect x="4.6" y="2" width="3.9" height="1" fill="#fff"/><rect x="0.7" y="3" width="10" height="6" rx="0.7" fill="#F9D75E" stroke="#C98C1E" stroke-width="1"/><rect x="2.2" y="3.8" width="6.4" height="4" fill="#FDE888"/><rect x="3.4" y="3.8" width="3.6" height="3.6" fill="#FFF4B0"/></svg>
<span style="left:45.7px;top:285.28px;font-size:7.45px;line-height:10px;color:#000;;transform:scaleY(1.08);transform-origin:0 55%">Markus M</span>
<div style="left:22px;top:301px;width:8px;height:1px;background:repeating-linear-gradient(90deg,#a8a8a8 0 1px,transparent 1px 2px)"></div>
<svg style="left:30px;top:296.42px" width="12" height="11" viewBox="0 0 12 11"><path d="M11.3 3.6V9.5H1.4" fill="none" stroke="#6e6a70" stroke-width="0.6" opacity="0.8"/><path d="M0.7 3V0.9Q0.7 0.4 1.2 0.4H3.6Q4 0.4 4.1 0.8L4.3 1.4H8.3Q8.8 1.4 8.8 1.9V3z" fill="#FBE48E" stroke="#D29A2C" stroke-width="0.7"/><rect x="0.9" y="0.3" width="2.9" height="0.8" fill="#D89A28"/><rect x="4.6" y="2" width="3.9" height="1" fill="#fff"/><rect x="0.7" y="3" width="10" height="6" rx="0.7" fill="#F9D75E" stroke="#C98C1E" stroke-width="1"/><rect x="2.2" y="3.8" width="6.4" height="4" fill="#FDE888"/><rect x="3.4" y="3.8" width="3.6" height="3.6" fill="#FFF4B0"/></svg>
<span style="left:45.7px;top:297.42px;font-size:7.45px;line-height:10px;color:#000;;transform:scaleY(1.08);transform-origin:0 55%">MiSchu</span>
<div style="left:22px;top:313px;width:8px;height:1px;background:repeating-linear-gradient(90deg,#a8a8a8 0 1px,transparent 1px 2px)"></div>
<svg style="left:18.7px;top:310.56px" width="6.6" height="6.6" viewBox="0 0 6.6 6.6"><rect x="0.5" y="0.5" width="5.6" height="5.6" fill="#fff" stroke="#9a9a9a" stroke-width="0.9"/><path d="M1.7 3.3h3.2" stroke="#000" stroke-width="0.9"/><path d="M3.3 1.7v3.2" stroke="#000" stroke-width="0.9"/></svg>
<svg style="left:30px;top:308.56px" width="12" height="11" viewBox="0 0 12 11"><path d="M11.3 3.6V9.5H1.4" fill="none" stroke="#6e6a70" stroke-width="0.6" opacity="0.8"/><path d="M0.7 3V0.9Q0.7 0.4 1.2 0.4H3.6Q4 0.4 4.1 0.8L4.3 1.4H8.3Q8.8 1.4 8.8 1.9V3z" fill="#FBE48E" stroke="#D29A2C" stroke-width="0.7"/><rect x="0.9" y="0.3" width="2.9" height="0.8" fill="#D89A28"/><rect x="4.6" y="2" width="3.9" height="1" fill="#fff"/><rect x="0.7" y="3" width="10" height="6" rx="0.7" fill="#F9D75E" stroke="#C98C1E" stroke-width="1"/><rect x="2.2" y="3.8" width="6.4" height="4" fill="#FDE888"/><rect x="3.4" y="3.8" width="3.6" height="3.6" fill="#FFF4B0"/></svg>
<span style="left:45.7px;top:309.56px;font-size:7.45px;line-height:10px;color:#000;;transform:scaleY(1.08);transform-origin:0 55%">Morgenstern</span>
<div style="left:22px;top:326px;width:8px;height:1px;background:repeating-linear-gradient(90deg,#a8a8a8 0 1px,transparent 1px 2px)"></div>
<svg style="left:18.7px;top:322.7px" width="6.6" height="6.6" viewBox="0 0 6.6 6.6"><rect x="0.5" y="0.5" width="5.6" height="5.6" fill="#fff" stroke="#6a6a6a" stroke-width="0.9"/><path d="M1.7 3.3h3.2" stroke="#000" stroke-width="0.9"/><path d="M3.3 1.7v3.2" stroke="#000" stroke-width="0.9"/></svg>
<svg style="left:30px;top:320.7px" width="12" height="11" viewBox="0 0 12 11"><path d="M11.3 3.6V9.5H1.4" fill="none" stroke="#6e6a70" stroke-width="0.6" opacity="0.8"/><path d="M0.7 3V0.9Q0.7 0.4 1.2 0.4H3.6Q4 0.4 4.1 0.8L4.3 1.4H8.3Q8.8 1.4 8.8 1.9V3z" fill="#FBE48E" stroke="#D29A2C" stroke-width="0.7"/><rect x="0.9" y="0.3" width="2.9" height="0.8" fill="#D89A28"/><rect x="4.6" y="2" width="3.9" height="1" fill="#fff"/><rect x="0.7" y="3" width="10" height="6" rx="0.7" fill="#F9D75E" stroke="#C98C1E" stroke-width="1"/><rect x="2.2" y="3.8" width="6.4" height="4" fill="#FDE888"/><rect x="3.4" y="3.8" width="3.6" height="3.6" fill="#FFF4B0"/></svg>
<span style="left:45.7px;top:321.7px;font-size:7.45px;line-height:10px;color:#000;;transform:scaleY(1.08);transform-origin:0 55%">NR</span>
<div style="left:22px;top:338px;width:8px;height:1px;background:repeating-linear-gradient(90deg,#a8a8a8 0 1px,transparent 1px 2px)"></div>
<svg style="left:18.7px;top:334.84px" width="6.6" height="6.6" viewBox="0 0 6.6 6.6"><rect x="0.5" y="0.5" width="5.6" height="5.6" fill="#fff" stroke="#6a6a6a" stroke-width="0.9"/><path d="M1.7 3.3h3.2" stroke="#000" stroke-width="0.9"/><path d="M3.3 1.7v3.2" stroke="#000" stroke-width="0.9"/></svg>
<svg style="left:30px;top:332.84px" width="12" height="11" viewBox="0 0 12 11"><path d="M11.3 3.6V9.5H1.4" fill="none" stroke="#6e6a70" stroke-width="0.6" opacity="0.8"/><path d="M0.7 3V0.9Q0.7 0.4 1.2 0.4H3.6Q4 0.4 4.1 0.8L4.3 1.4H8.3Q8.8 1.4 8.8 1.9V3z" fill="#FBE48E" stroke="#D29A2C" stroke-width="0.7"/><rect x="0.9" y="0.3" width="2.9" height="0.8" fill="#D89A28"/><rect x="4.6" y="2" width="3.9" height="1" fill="#fff"/><rect x="0.7" y="3" width="10" height="6" rx="0.7" fill="#F9D75E" stroke="#C98C1E" stroke-width="1"/><rect x="2.2" y="3.8" width="6.4" height="4" fill="#FDE888"/><rect x="3.4" y="3.8" width="3.6" height="3.6" fill="#FFF4B0"/></svg>
<span style="left:45.7px;top:333.84px;font-size:7.45px;line-height:10px;color:#000;;transform:scaleY(1.08);transform-origin:0 55%">PT 2_1</span>
<div style="left:22px;top:350px;width:8px;height:1px;background:repeating-linear-gradient(90deg,#a8a8a8 0 1px,transparent 1px 2px)"></div>
<svg style="left:18.7px;top:346.98px" width="6.6" height="6.6" viewBox="0 0 6.6 6.6"><rect x="0.5" y="0.5" width="5.6" height="5.6" fill="#fff" stroke="#9a9a9a" stroke-width="0.9"/><path d="M1.7 3.3h3.2" stroke="#000" stroke-width="0.9"/><path d="M3.3 1.7v3.2" stroke="#000" stroke-width="0.9"/></svg>
<svg style="left:30px;top:344.98px" width="12" height="11" viewBox="0 0 12 11"><path d="M11.3 3.6V9.5H1.4" fill="none" stroke="#6e6a70" stroke-width="0.6" opacity="0.8"/><path d="M0.7 3V0.9Q0.7 0.4 1.2 0.4H3.6Q4 0.4 4.1 0.8L4.3 1.4H8.3Q8.8 1.4 8.8 1.9V3z" fill="#FBE48E" stroke="#D29A2C" stroke-width="0.7"/><rect x="0.9" y="0.3" width="2.9" height="0.8" fill="#D89A28"/><rect x="4.6" y="2" width="3.9" height="1" fill="#fff"/><rect x="0.7" y="3" width="10" height="6" rx="0.7" fill="#F9D75E" stroke="#C98C1E" stroke-width="1"/><rect x="2.2" y="3.8" width="6.4" height="4" fill="#FDE888"/><rect x="3.4" y="3.8" width="3.6" height="3.6" fill="#FFF4B0"/></svg>
<span style="left:45.7px;top:345.98px;font-size:7.45px;line-height:10px;color:#000;;transform:scaleY(1.08);transform-origin:0 55%">Sigi Grenzwert Be</span>
<div style="left:22px;top:362px;width:8px;height:1px;background:repeating-linear-gradient(90deg,#a8a8a8 0 1px,transparent 1px 2px)"></div>
<svg style="left:30px;top:357.12px" width="12" height="11" viewBox="0 0 12 11"><path d="M11.3 3.6V9.5H1.4" fill="none" stroke="#6e6a70" stroke-width="0.6" opacity="0.8"/><path d="M0.7 3V0.9Q0.7 0.4 1.2 0.4H3.6Q4 0.4 4.1 0.8L4.3 1.4H8.3Q8.8 1.4 8.8 1.9V3z" fill="#FBE48E" stroke="#D29A2C" stroke-width="0.7"/><rect x="0.9" y="0.3" width="2.9" height="0.8" fill="#D89A28"/><rect x="4.6" y="2" width="3.9" height="1" fill="#fff"/><rect x="0.7" y="3" width="10" height="6" rx="0.7" fill="#F9D75E" stroke="#C98C1E" stroke-width="1"/><rect x="2.2" y="3.8" width="6.4" height="4" fill="#FDE888"/><rect x="3.4" y="3.8" width="3.6" height="3.6" fill="#FFF4B0"/></svg>
<span style="left:45.7px;top:358.12px;font-size:7.45px;line-height:10px;color:#000;;transform:scaleY(1.08);transform-origin:0 55%">System</span>
</div></div>
<div style="left:586.2px;top:58.5px;width:264px;height:13px;border:1px solid #8a8680;border-radius:2px;box-sizing:border-box;background:#D6D2CA"></div>
<span style="left:590.5px;top:60.7px;font-size:7.85px;line-height:10px;color:#000;;transform:scaleY(1.08);transform-origin:0 55%">Line Tree View</span>
<svg style="left:826.6px;top:61px" width="6" height="9" viewBox="0 0 6 9"><rect x="1.4" y="0.6" width="3" height="4.4" fill="none" stroke="#000" stroke-width="0.9"/><rect x="3.2" y="0.6" width="1.2" height="4.4" fill="#000"/><path d="M0.3 5.2h5.2M2.9 5.2v3.2" stroke="#000" stroke-width="0.9"/></svg>
<svg style="left:837px;top:62.5px" width="6" height="6" viewBox="0 0 6 6"><path d="M0.5 0.5L5.5 5.5M5.5 0.5L0.5 5.5" stroke="#000" stroke-width="0.9"/></svg>
<div style="left:586.8px;top:74.6px;width:259.2px;height:292.4px;background:#303030"></div>
<div style="left:588px;top:75.6px;width:258px;height:290.4px;background:#fff"></div>
<div style="left:586.3px;top:367px;width:259.7px;height:2.6px;background:#FAF8EA"></div>
<div style="left:586px;top:369.8px;width:260px;height:51.4px;background:#3a3a3a"></div>
<div style="left:587px;top:370.8px;width:259px;height:49.4px;background:#D4D0C8"></div>
<div style="left:616.3px;top:77.7px;width:31px;height:10.6px;background:#D4D0C8"></div>
<div style="left:608px;top:89px;width:1px;height:152px;background:repeating-linear-gradient(180deg,#a8a8a8 0 1px,transparent 1px 2px)"></div>
<div style="left:598px;top:83px;width:4px;height:1px;background:repeating-linear-gradient(90deg,#a8a8a8 0 1px,transparent 1px 2px)"></div>
<svg style="left:591px;top:79.9px" width="6.6" height="6.6" viewBox="0 0 6.6 6.6"><rect x="0.5" y="0.5" width="5.6" height="5.6" fill="#fff" stroke="#9a9a9a" stroke-width="0.9"/><path d="M1.7 3.3h3.2" stroke="#000" stroke-width="0.9"/></svg>
<svg style="left:602px;top:77.9px" width="12" height="11" viewBox="0 0 12 11"><path d="M11.3 3.6V9.5H1.4" fill="none" stroke="#6e6a70" stroke-width="0.6" opacity="0.8"/><path d="M0.7 3V0.9Q0.7 0.4 1.2 0.4H3.6Q4 0.4 4.1 0.8L4.3 1.4H8.3Q8.8 1.4 8.8 1.9V3z" fill="#FBE48E" stroke="#D29A2C" stroke-width="0.7"/><rect x="0.9" y="0.3" width="2.9" height="0.8" fill="#D89A28"/><rect x="4.6" y="2" width="3.9" height="1" fill="#fff"/><rect x="0.7" y="3" width="10" height="6" rx="0.7" fill="#F9D75E" stroke="#C98C1E" stroke-width="1"/><rect x="2.2" y="3.8" width="6.4" height="4" fill="#FDE888"/><rect x="3.4" y="3.8" width="3.6" height="3.6" fill="#FFF4B0"/></svg>
<span style="left:617.6px;top:78.9px;font-size:7.45px;line-height:10px;color:#000;;transform:scaleY(1.08);transform-origin:0 55%">My Lines</span>
<div style="left:608px;top:95px;width:8px;height:1px;background:repeating-linear-gradient(90deg,#a8a8a8 0 1px,transparent 1px 2px)"></div>
<svg style="left:604.8px;top:92.04px" width="6.6" height="6.6" viewBox="0 0 6.6 6.6"><rect x="0.5" y="0.5" width="5.6" height="5.6" fill="#fff" stroke="#9a9a9a" stroke-width="0.9"/><path d="M1.7 3.3h3.2" stroke="#000" stroke-width="0.9"/><path d="M3.3 1.7v3.2" stroke="#000" stroke-width="0.9"/></svg>
<svg style="left:616.1px;top:90.04px" width="12" height="11" viewBox="0 0 12 11"><path d="M11.3 3.6V9.5H1.4" fill="none" stroke="#6e6a70" stroke-width="0.6" opacity="0.8"/><path d="M0.7 3V0.9Q0.7 0.4 1.2 0.4H3.6Q4 0.4 4.1 0.8L4.3 1.4H8.3Q8.8 1.4 8.8 1.9V3z" fill="#FBE48E" stroke="#D29A2C" stroke-width="0.7"/><rect x="0.9" y="0.3" width="2.9" height="0.8" fill="#D89A28"/><rect x="4.6" y="2" width="3.9" height="1" fill="#fff"/><rect x="0.7" y="3" width="10" height="6" rx="0.7" fill="#F9D75E" stroke="#C98C1E" stroke-width="1"/><rect x="2.2" y="3.8" width="6.4" height="4" fill="#FDE888"/><rect x="3.4" y="3.8" width="3.6" height="3.6" fill="#FFF4B0"/></svg>
<span style="left:631.8px;top:91.04px;font-size:7.45px;line-height:10px;color:#000;;transform:scaleY(1.08);transform-origin:0 55%">Build 57</span>
<div style="left:608px;top:107px;width:8px;height:1px;background:repeating-linear-gradient(90deg,#a8a8a8 0 1px,transparent 1px 2px)"></div>
<svg style="left:604.8px;top:104.18px" width="6.6" height="6.6" viewBox="0 0 6.6 6.6"><rect x="0.5" y="0.5" width="5.6" height="5.6" fill="#fff" stroke="#6a6a6a" stroke-width="0.9"/><path d="M1.7 3.3h3.2" stroke="#000" stroke-width="0.9"/><path d="M3.3 1.7v3.2" stroke="#000" stroke-width="0.9"/></svg>
<svg style="left:616.1px;top:102.18px" width="12" height="11" viewBox="0 0 12 11"><path d="M11.3 3.6V9.5H1.4" fill="none" stroke="#6e6a70" stroke-width="0.6" opacity="0.8"/><path d="M0.7 3V0.9Q0.7 0.4 1.2 0.4H3.6Q4 0.4 4.1 0.8L4.3 1.4H8.3Q8.8 1.4 8.8 1.9V3z" fill="#FBE48E" stroke="#D29A2C" stroke-width="0.7"/><rect x="0.9" y="0.3" width="2.9" height="0.8" fill="#D89A28"/><rect x="4.6" y="2" width="3.9" height="1" fill="#fff"/><rect x="0.7" y="3" width="10" height="6" rx="0.7" fill="#F9D75E" stroke="#C98C1E" stroke-width="1"/><rect x="2.2" y="3.8" width="6.4" height="4" fill="#FDE888"/><rect x="3.4" y="3.8" width="3.6" height="3.6" fill="#FFF4B0"/></svg>
<span style="left:631.8px;top:103.18px;font-size:7.45px;line-height:10px;color:#000;;transform:scaleY(1.08);transform-origin:0 55%">Delphi</span>
<div style="left:608px;top:119px;width:8px;height:1px;background:repeating-linear-gradient(90deg,#a8a8a8 0 1px,transparent 1px 2px)"></div>
<svg style="left:604.8px;top:116.32px" width="6.6" height="6.6" viewBox="0 0 6.6 6.6"><rect x="0.5" y="0.5" width="5.6" height="5.6" fill="#fff" stroke="#6a6a6a" stroke-width="0.9"/><path d="M1.7 3.3h3.2" stroke="#000" stroke-width="0.9"/><path d="M3.3 1.7v3.2" stroke="#000" stroke-width="0.9"/></svg>
<svg style="left:616.1px;top:114.32px" width="12" height="11" viewBox="0 0 12 11"><path d="M11.3 3.6V9.5H1.4" fill="none" stroke="#6e6a70" stroke-width="0.6" opacity="0.8"/><path d="M0.7 3V0.9Q0.7 0.4 1.2 0.4H3.6Q4 0.4 4.1 0.8L4.3 1.4H8.3Q8.8 1.4 8.8 1.9V3z" fill="#FBE48E" stroke="#D29A2C" stroke-width="0.7"/><rect x="0.9" y="0.3" width="2.9" height="0.8" fill="#D89A28"/><rect x="4.6" y="2" width="3.9" height="1" fill="#fff"/><rect x="0.7" y="3" width="10" height="6" rx="0.7" fill="#F9D75E" stroke="#C98C1E" stroke-width="1"/><rect x="2.2" y="3.8" width="6.4" height="4" fill="#FDE888"/><rect x="3.4" y="3.8" width="3.6" height="3.6" fill="#FFF4B0"/></svg>
<span style="left:631.8px;top:115.32px;font-size:7.45px;line-height:10px;color:#000;;transform:scaleY(1.08);transform-origin:0 55%">HF-NS09-DTC Portal</span>
<div style="left:608px;top:131px;width:8px;height:1px;background:repeating-linear-gradient(90deg,#a8a8a8 0 1px,transparent 1px 2px)"></div>
<svg style="left:604.8px;top:128.46px" width="6.6" height="6.6" viewBox="0 0 6.6 6.6"><rect x="0.5" y="0.5" width="5.6" height="5.6" fill="#fff" stroke="#9a9a9a" stroke-width="0.9"/><path d="M1.7 3.3h3.2" stroke="#000" stroke-width="0.9"/><path d="M3.3 1.7v3.2" stroke="#000" stroke-width="0.9"/></svg>
<svg style="left:616.1px;top:126.46px" width="12" height="11" viewBox="0 0 12 11"><path d="M11.3 3.6V9.5H1.4" fill="none" stroke="#6e6a70" stroke-width="0.6" opacity="0.8"/><path d="M0.7 3V0.9Q0.7 0.4 1.2 0.4H3.6Q4 0.4 4.1 0.8L4.3 1.4H8.3Q8.8 1.4 8.8 1.9V3z" fill="#FBE48E" stroke="#D29A2C" stroke-width="0.7"/><rect x="0.9" y="0.3" width="2.9" height="0.8" fill="#D89A28"/><rect x="4.6" y="2" width="3.9" height="1" fill="#fff"/><rect x="0.7" y="3" width="10" height="6" rx="0.7" fill="#F9D75E" stroke="#C98C1E" stroke-width="1"/><rect x="2.2" y="3.8" width="6.4" height="4" fill="#FDE888"/><rect x="3.4" y="3.8" width="3.6" height="3.6" fill="#FFF4B0"/></svg>
<span style="left:631.8px;top:127.46px;font-size:7.45px;line-height:10px;color:#000;;transform:scaleY(1.08);transform-origin:0 55%">Hubert</span>
<div style="left:608px;top:143px;width:8px;height:1px;background:repeating-linear-gradient(90deg,#a8a8a8 0 1px,transparent 1px 2px)"></div>
<svg style="left:604.8px;top:140.6px" width="6.6" height="6.6" viewBox="0 0 6.6 6.6"><rect x="0.5" y="0.5" width="5.6" height="5.6" fill="#fff" stroke="#6a6a6a" stroke-width="0.9"/><path d="M1.7 3.3h3.2" stroke="#000" stroke-width="0.9"/><path d="M3.3 1.7v3.2" stroke="#000" stroke-width="0.9"/></svg>
<svg style="left:616.1px;top:138.6px" width="12" height="11" viewBox="0 0 12 11"><path d="M11.3 3.6V9.5H1.4" fill="none" stroke="#6e6a70" stroke-width="0.6" opacity="0.8"/><path d="M0.7 3V0.9Q0.7 0.4 1.2 0.4H3.6Q4 0.4 4.1 0.8L4.3 1.4H8.3Q8.8 1.4 8.8 1.9V3z" fill="#FBE48E" stroke="#D29A2C" stroke-width="0.7"/><rect x="0.9" y="0.3" width="2.9" height="0.8" fill="#D89A28"/><rect x="4.6" y="2" width="3.9" height="1" fill="#fff"/><rect x="0.7" y="3" width="10" height="6" rx="0.7" fill="#F9D75E" stroke="#C98C1E" stroke-width="1"/><rect x="2.2" y="3.8" width="6.4" height="4" fill="#FDE888"/><rect x="3.4" y="3.8" width="3.6" height="3.6" fill="#FFF4B0"/></svg>
<span style="left:631.8px;top:139.6px;font-size:7.45px;line-height:10px;color:#000;;transform:scaleY(1.08);transform-origin:0 55%">Import</span>
<div style="left:608px;top:156px;width:8px;height:1px;background:repeating-linear-gradient(90deg,#a8a8a8 0 1px,transparent 1px 2px)"></div>
<svg style="left:604.8px;top:152.74px" width="6.6" height="6.6" viewBox="0 0 6.6 6.6"><rect x="0.5" y="0.5" width="5.6" height="5.6" fill="#fff" stroke="#6a6a6a" stroke-width="0.9"/><path d="M1.7 3.3h3.2" stroke="#000" stroke-width="0.9"/><path d="M3.3 1.7v3.2" stroke="#000" stroke-width="0.9"/></svg>
<svg style="left:616.1px;top:150.74px" width="12" height="11" viewBox="0 0 12 11"><path d="M11.3 3.6V9.5H1.4" fill="none" stroke="#6e6a70" stroke-width="0.6" opacity="0.8"/><path d="M0.7 3V0.9Q0.7 0.4 1.2 0.4H3.6Q4 0.4 4.1 0.8L4.3 1.4H8.3Q8.8 1.4 8.8 1.9V3z" fill="#FBE48E" stroke="#D29A2C" stroke-width="0.7"/><rect x="0.9" y="0.3" width="2.9" height="0.8" fill="#D89A28"/><rect x="4.6" y="2" width="3.9" height="1" fill="#fff"/><rect x="0.7" y="3" width="10" height="6" rx="0.7" fill="#F9D75E" stroke="#C98C1E" stroke-width="1"/><rect x="2.2" y="3.8" width="6.4" height="4" fill="#FDE888"/><rect x="3.4" y="3.8" width="3.6" height="3.6" fill="#FFF4B0"/></svg>
<span style="left:631.8px;top:151.74px;font-size:7.45px;line-height:10px;color:#000;;transform:scaleY(1.08);transform-origin:0 55%">Linie HS60 Box4</span>
<div style="left:608px;top:168px;width:8px;height:1px;background:repeating-linear-gradient(90deg,#a8a8a8 0 1px,transparent 1px 2px)"></div>
<svg style="left:604.8px;top:164.88px" width="6.6" height="6.6" viewBox="0 0 6.6 6.6"><rect x="0.5" y="0.5" width="5.6" height="5.6" fill="#fff" stroke="#9a9a9a" stroke-width="0.9"/><path d="M1.7 3.3h3.2" stroke="#000" stroke-width="0.9"/><path d="M3.3 1.7v3.2" stroke="#000" stroke-width="0.9"/></svg>
<svg style="left:616.1px;top:162.88px" width="12" height="11" viewBox="0 0 12 11"><path d="M11.3 3.6V9.5H1.4" fill="none" stroke="#6e6a70" stroke-width="0.6" opacity="0.8"/><path d="M0.7 3V0.9Q0.7 0.4 1.2 0.4H3.6Q4 0.4 4.1 0.8L4.3 1.4H8.3Q8.8 1.4 8.8 1.9V3z" fill="#FBE48E" stroke="#D29A2C" stroke-width="0.7"/><rect x="0.9" y="0.3" width="2.9" height="0.8" fill="#D89A28"/><rect x="4.6" y="2" width="3.9" height="1" fill="#fff"/><rect x="0.7" y="3" width="10" height="6" rx="0.7" fill="#F9D75E" stroke="#C98C1E" stroke-width="1"/><rect x="2.2" y="3.8" width="6.4" height="4" fill="#FDE888"/><rect x="3.4" y="3.8" width="3.6" height="3.6" fill="#FFF4B0"/></svg>
<span style="left:631.8px;top:163.88px;font-size:7.45px;line-height:10px;color:#000;;transform:scaleY(1.08);transform-origin:0 55%">MiSchu</span>
<div style="left:608px;top:180px;width:8px;height:1px;background:repeating-linear-gradient(90deg,#a8a8a8 0 1px,transparent 1px 2px)"></div>
<svg style="left:604.8px;top:177.02px" width="6.6" height="6.6" viewBox="0 0 6.6 6.6"><rect x="0.5" y="0.5" width="5.6" height="5.6" fill="#fff" stroke="#6a6a6a" stroke-width="0.9"/><path d="M1.7 3.3h3.2" stroke="#000" stroke-width="0.9"/><path d="M3.3 1.7v3.2" stroke="#000" stroke-width="0.9"/></svg>
<svg style="left:616.1px;top:175.02px" width="12" height="11" viewBox="0 0 12 11"><path d="M11.3 3.6V9.5H1.4" fill="none" stroke="#6e6a70" stroke-width="0.6" opacity="0.8"/><path d="M0.7 3V0.9Q0.7 0.4 1.2 0.4H3.6Q4 0.4 4.1 0.8L4.3 1.4H8.3Q8.8 1.4 8.8 1.9V3z" fill="#FBE48E" stroke="#D29A2C" stroke-width="0.7"/><rect x="0.9" y="0.3" width="2.9" height="0.8" fill="#D89A28"/><rect x="4.6" y="2" width="3.9" height="1" fill="#fff"/><rect x="0.7" y="3" width="10" height="6" rx="0.7" fill="#F9D75E" stroke="#C98C1E" stroke-width="1"/><rect x="2.2" y="3.8" width="6.4" height="4" fill="#FDE888"/><rect x="3.4" y="3.8" width="3.6" height="3.6" fill="#FFF4B0"/></svg>
<span style="left:631.8px;top:176.02px;font-size:7.45px;line-height:10px;color:#000;;transform:scaleY(1.08);transform-origin:0 55%">Sigi</span>
<div style="left:608px;top:192px;width:8px;height:1px;background:repeating-linear-gradient(90deg,#a8a8a8 0 1px,transparent 1px 2px)"></div>
<svg style="left:604.8px;top:189.16px" width="6.6" height="6.6" viewBox="0 0 6.6 6.6"><rect x="0.5" y="0.5" width="5.6" height="5.6" fill="#fff" stroke="#6a6a6a" stroke-width="0.9"/><path d="M1.7 3.3h3.2" stroke="#000" stroke-width="0.9"/><path d="M3.3 1.7v3.2" stroke="#000" stroke-width="0.9"/></svg>
<svg style="left:616.1px;top:187.16px" width="12" height="11" viewBox="0 0 12 11"><path d="M11.3 3.6V9.5H1.4" fill="none" stroke="#6e6a70" stroke-width="0.6" opacity="0.8"/><path d="M0.7 3V0.9Q0.7 0.4 1.2 0.4H3.6Q4 0.4 4.1 0.8L4.3 1.4H8.3Q8.8 1.4 8.8 1.9V3z" fill="#FBE48E" stroke="#D29A2C" stroke-width="0.7"/><rect x="0.9" y="0.3" width="2.9" height="0.8" fill="#D89A28"/><rect x="4.6" y="2" width="3.9" height="1" fill="#fff"/><rect x="0.7" y="3" width="10" height="6" rx="0.7" fill="#F9D75E" stroke="#C98C1E" stroke-width="1"/><rect x="2.2" y="3.8" width="6.4" height="4" fill="#FDE888"/><rect x="3.4" y="3.8" width="3.6" height="3.6" fill="#FFF4B0"/></svg>
<span style="left:631.8px;top:188.16px;font-size:7.45px;line-height:10px;color:#000;;transform:scaleY(1.08);transform-origin:0 55%">System</span>
<div style="left:608px;top:204px;width:8px;height:1px;background:repeating-linear-gradient(90deg,#a8a8a8 0 1px,transparent 1px 2px)"></div>
<svg style="left:604.8px;top:201.3px" width="6.6" height="6.6" viewBox="0 0 6.6 6.6"><rect x="0.5" y="0.5" width="5.6" height="5.6" fill="#fff" stroke="#9a9a9a" stroke-width="0.9"/><path d="M1.7 3.3h3.2" stroke="#000" stroke-width="0.9"/><path d="M3.3 1.7v3.2" stroke="#000" stroke-width="0.9"/></svg>
<svg style="left:616.1px;top:199.3px" width="12" height="11" viewBox="0 0 12 11"><path d="M11.3 3.6V9.5H1.4" fill="none" stroke="#6e6a70" stroke-width="0.6" opacity="0.8"/><path d="M0.7 3V0.9Q0.7 0.4 1.2 0.4H3.6Q4 0.4 4.1 0.8L4.3 1.4H8.3Q8.8 1.4 8.8 1.9V3z" fill="#FBE48E" stroke="#D29A2C" stroke-width="0.7"/><rect x="0.9" y="0.3" width="2.9" height="0.8" fill="#D89A28"/><rect x="4.6" y="2" width="3.9" height="1" fill="#fff"/><rect x="0.7" y="3" width="10" height="6" rx="0.7" fill="#F9D75E" stroke="#C98C1E" stroke-width="1"/><rect x="2.2" y="3.8" width="6.4" height="4" fill="#FDE888"/><rect x="3.4" y="3.8" width="3.6" height="3.6" fill="#FFF4B0"/></svg>
<span style="left:631.8px;top:200.3px;font-size:7.45px;line-height:10px;color:#000;;transform:scaleY(1.08);transform-origin:0 55%">TBe</span>
<div style="left:608px;top:216px;width:8px;height:1px;background:repeating-linear-gradient(90deg,#a8a8a8 0 1px,transparent 1px 2px)"></div>
<svg style="left:604.8px;top:213.44px" width="6.6" height="6.6" viewBox="0 0 6.6 6.6"><rect x="0.5" y="0.5" width="5.6" height="5.6" fill="#fff" stroke="#6a6a6a" stroke-width="0.9"/><path d="M1.7 3.3h3.2" stroke="#000" stroke-width="0.9"/><path d="M3.3 1.7v3.2" stroke="#000" stroke-width="0.9"/></svg>
<svg style="left:616.1px;top:211.44px" width="12" height="11" viewBox="0 0 12 11"><path d="M11.3 3.6V9.5H1.4" fill="none" stroke="#6e6a70" stroke-width="0.6" opacity="0.8"/><path d="M0.7 3V0.9Q0.7 0.4 1.2 0.4H3.6Q4 0.4 4.1 0.8L4.3 1.4H8.3Q8.8 1.4 8.8 1.9V3z" fill="#FBE48E" stroke="#D29A2C" stroke-width="0.7"/><rect x="0.9" y="0.3" width="2.9" height="0.8" fill="#D89A28"/><rect x="4.6" y="2" width="3.9" height="1" fill="#fff"/><rect x="0.7" y="3" width="10" height="6" rx="0.7" fill="#F9D75E" stroke="#C98C1E" stroke-width="1"/><rect x="2.2" y="3.8" width="6.4" height="4" fill="#FDE888"/><rect x="3.4" y="3.8" width="3.6" height="3.6" fill="#FFF4B0"/></svg>
<span style="left:631.8px;top:212.44px;font-size:7.45px;line-height:10px;color:#000;;transform:scaleY(1.08);transform-origin:0 55%">jf</span>
<div style="left:608px;top:228px;width:8px;height:1px;background:repeating-linear-gradient(90deg,#a8a8a8 0 1px,transparent 1px 2px)"></div>
<svg style="left:604.8px;top:225.58px" width="6.6" height="6.6" viewBox="0 0 6.6 6.6"><rect x="0.5" y="0.5" width="5.6" height="5.6" fill="#fff" stroke="#6a6a6a" stroke-width="0.9"/><path d="M1.7 3.3h3.2" stroke="#000" stroke-width="0.9"/><path d="M3.3 1.7v3.2" stroke="#000" stroke-width="0.9"/></svg>
<svg style="left:616.1px;top:223.58px" width="12" height="11" viewBox="0 0 12 11"><path d="M11.3 3.6V9.5H1.4" fill="none" stroke="#6e6a70" stroke-width="0.6" opacity="0.8"/><path d="M0.7 3V0.9Q0.7 0.4 1.2 0.4H3.6Q4 0.4 4.1 0.8L4.3 1.4H8.3Q8.8 1.4 8.8 1.9V3z" fill="#FBE48E" stroke="#D29A2C" stroke-width="0.7"/><rect x="0.9" y="0.3" width="2.9" height="0.8" fill="#D89A28"/><rect x="4.6" y="2" width="3.9" height="1" fill="#fff"/><rect x="0.7" y="3" width="10" height="6" rx="0.7" fill="#F9D75E" stroke="#C98C1E" stroke-width="1"/><rect x="2.2" y="3.8" width="6.4" height="4" fill="#FDE888"/><rect x="3.4" y="3.8" width="3.6" height="3.6" fill="#FFF4B0"/></svg>
<span style="left:631.8px;top:224.58px;font-size:7.45px;line-height:10px;color:#000;;transform:scaleY(1.08);transform-origin:0 55%">psp</span>
<div style="left:608px;top:241px;width:8px;height:1px;background:repeating-linear-gradient(90deg,#a8a8a8 0 1px,transparent 1px 2px)"></div>
<svg style="left:604.8px;top:237.72px" width="6.6" height="6.6" viewBox="0 0 6.6 6.6"><rect x="0.5" y="0.5" width="5.6" height="5.6" fill="#fff" stroke="#9a9a9a" stroke-width="0.9"/><path d="M1.7 3.3h3.2" stroke="#000" stroke-width="0.9"/><path d="M3.3 1.7v3.2" stroke="#000" stroke-width="0.9"/></svg>
<svg style="left:616.1px;top:235.72px" width="12" height="11" viewBox="0 0 12 11"><path d="M11.3 3.6V9.5H1.4" fill="none" stroke="#6e6a70" stroke-width="0.6" opacity="0.8"/><path d="M0.7 3V0.9Q0.7 0.4 1.2 0.4H3.6Q4 0.4 4.1 0.8L4.3 1.4H8.3Q8.8 1.4 8.8 1.9V3z" fill="#FBE48E" stroke="#D29A2C" stroke-width="0.7"/><rect x="0.9" y="0.3" width="2.9" height="0.8" fill="#D89A28"/><rect x="4.6" y="2" width="3.9" height="1" fill="#fff"/><rect x="0.7" y="3" width="10" height="6" rx="0.7" fill="#F9D75E" stroke="#C98C1E" stroke-width="1"/><rect x="2.2" y="3.8" width="6.4" height="4" fill="#FDE888"/><rect x="3.4" y="3.8" width="3.6" height="3.6" fill="#FFF4B0"/></svg>
<span style="left:631.8px;top:236.72px;font-size:7.45px;line-height:10px;color:#000;;transform:scaleY(1.08);transform-origin:0 55%">turbo HF3</span>
<div style="left:235px;top:56.2px;width:345.5px;height:336.4px;background:#D4D0C8;box-shadow:inset 1.6px 1.6px 0 #6a6a6a,inset -1px -1px 0 #fff,inset 2.6px 2.6px 0 #fff"></div>
<div style="left:242px;top:60.2px;width:16.8px;height:16.8px;background:#F0EEEA;box-shadow:inset 1.6px 1.6px 0 #707070,inset -1px -1px 0 #fff"></div>
<svg style="left:242px;top:60.2px" width="16.8" height="16.8" viewBox="0 0 16.8 16.8"><path d="M6 4.4v8.8M8 4.4v8.8M10 4.4v8.8M12 4.4v8.8" stroke="#444" stroke-width="0.8" stroke-dasharray="0.8 0.6"/><rect x="4.4" y="6.2" width="10" height="6.2" fill="#808080" stroke="#000" stroke-width="1.2"/></svg>
<div style="left:258.8px;top:60.2px;width:17px;height:16.8px;background:#D4D0C8;box-shadow:inset 1px 1px 0 #ece9e4,inset -1px -1px 0 #707070"></div>
<svg style="left:258.8px;top:60.2px" width="17" height="16.8" viewBox="0 0 17 16.8"><path d="M5.6 4v9.4M7.6 4v9.4M9.6 4v9.4M11.6 4v9.4" stroke="#444" stroke-width="0.8" stroke-dasharray="0.8 0.6"/><rect x="3.8" y="5.8" width="10.4" height="6.4" fill="#D8D4CC" stroke="#000" stroke-width="1.2"/></svg>
<div style="left:523px;top:59.8px;width:16.8px;height:17px;background:#D4D0C8;box-shadow:inset 1px 1px 0 #fff,inset -1px -1px 0 #808080;"></div>
<svg style="left:523px;top:60.2px" width="16.8" height="16" viewBox="0 0 16.8 16"><path d="M5.4 6.4l1.6-3.6h5l-0.6 3.6" fill="#fff" stroke="#555" stroke-width="0.7"/><rect x="2.8" y="6" width="11" height="6.4" rx="2.4" fill="#e4e4e4" stroke="#000090" stroke-width="1.1"/><rect x="4" y="9" width="8.6" height="3.4" rx="1.2" fill="#c8c8c8" stroke="#000090" stroke-width="0.8"/><rect x="8.4" y="9.8" width="2.8" height="1.2" fill="#e8d800"/></svg>
<div style="left:546px;top:59.8px;width:16.6px;height:17px;background:#D4D0C8;box-shadow:inset 1px 1px 0 #fff,inset -1px -1px 0 #808080;"></div>
<svg style="left:546px;top:59.8px" width="16.6" height="17" viewBox="0 0 16.6 17"><path d="M5.2 5.6L10.8 11.4M10.8 5.6L5.2 11.4" stroke="#000060" stroke-width="1.9"/></svg>
<div style="left:236px;top:86.8px;width:343.5px;height:305.2px;background:#202020"></div>
<div style="left:236.9px;top:87.9px;width:342.6px;height:304.1px;background:#fff"></div>
<div style="left:566.6px;top:87.4px;width:11.6px;height:281px;background:#E9E7E3"></div>
<div style="left:566.6px;top:87.4px;width:11.4px;height:11.6px;background:#D4D0C8;box-shadow:inset 1px 1px 0 #fff,inset -1px -1px 0 #808080;"></div>
<svg style="left:566.6px;top:87.4px" width="11.4" height="11.6" viewBox="0 0 11.4 11.6"><path d="M3.1 7.1h5.2l-2.6 -2.8z" fill="#8a8782"/></svg>
<div style="left:566.6px;top:368.2px;width:11.2px;height:9.8px;background:#D4D0C8;box-shadow:inset 1px 1px 0 #fff,inset -1px -1px 0 #808080;"></div>
<svg style="left:566.6px;top:368.2px" width="11.2" height="9.8" viewBox="0 0 11.2 9.8"><path d="M2.9999999999999996 3.6000000000000005h5.2l-2.6 2.8z" fill="#8a8782"/></svg>
<div style="left:236.9px;top:379.8px;width:329px;height:11.4px;background:#E9E7E3"></div>
<div style="left:236.9px;top:379.8px;width:11.4px;height:11.2px;background:#D4D0C8;box-shadow:inset 1px 1px 0 #fff,inset -1px -1px 0 #808080;"></div>
<svg style="left:236.9px;top:379.8px" width="11.4" height="11.2" viewBox="0 0 11.4 11.2"><path d="M7.0 2.9999999999999996v5.2l-2.8 -2.6z" fill="#8a8782"/></svg>
<div style="left:555.4px;top:379.8px;width:10.8px;height:11.2px;background:#D4D0C8;box-shadow:inset 1px 1px 0 #fff,inset -1px -1px 0 #808080;"></div>
<svg style="left:555.4px;top:379.8px" width="10.8" height="11.2" viewBox="0 0 10.8 11.2"><path d="M4.1000000000000005 2.9999999999999996v5.2l2.8 -2.6z" fill="#8a8782"/></svg>
<div style="left:566.4px;top:378.4px;width:12px;height:13px;background:#fff"></div>
<div style="left:236px;top:391.4px;width:343.5px;height:1px;background:#fff"></div>
<div style="left:578.6px;top:86.4px;width:1px;height:305px;background:#fff"></div>
<svg style="left:322px;top:99.5px" width="160" height="12" viewBox="0 0 160 12"><path d="M2.5 6H152" stroke="#5e7a10" stroke-width="2.3"/><path d="M2.5 6H152" stroke="#a4e018" stroke-width="1.1"/><path d="M150.5 2.2L156 6L150.5 9.8z" fill="#a4e018" stroke="#4e6808" stroke-width="0.8"/></svg>
<span style="left:327.6px;top:118.3px;font-size:13.5px;line-height:16px;color:#000;transform:scaleY(1.1);transform-origin:0 78%">Setup: LBO_Ruest_01</span>
<span style="left:374.8px;top:154.3px;font-size:7.8px;line-height:10px;color:#000;;transform:scale(1.031,1.08);transform-origin:0 55%">Line: HF_44</span>
<svg style="left:300px;top:150px" width="200" height="200" viewBox="0 0 200 200"><rect x="22.6" y="13.6" width="152.8" height="180.3" fill="#fff" stroke="#0000f0" stroke-width="1.5"/><rect x="24.6" y="75.2" width="16.8" height="56" fill="#DADADE" stroke="#444" stroke-width="0.6"/><rect x="155.2" y="75.2" width="17.2" height="56" fill="#DADADE" stroke="#444" stroke-width="0.6"/><rect x="24.6" y="74.8" width="16.8" height="1" fill="#444"/><rect x="155.2" y="74.8" width="17.2" height="1" fill="#444"/><rect x="24.6" y="130.6" width="16.8" height="1" fill="#444"/><rect x="155.2" y="130.6" width="17.2" height="1" fill="#444"/><rect x="47.6" y="82" width="101.8" height="43.4" fill="#FBF8E6" stroke="#222" stroke-width="0.7"/><rect x="47.6" y="81.5" width="101.8" height="1.1" fill="#111"/><rect x="47.6" y="124.9" width="101.8" height="1.1" fill="#111"/><rect x="41.2" y="33.4" width="6.5" height="140.3" fill="#FBF8E6" stroke="#444" stroke-width="0.6"/><rect x="149.3" y="33.4" width="6" height="140.3" fill="#FBF8E6" stroke="#444" stroke-width="0.6"/><rect x="49.3" y="48" width="32.6" height="23.4" fill="#fff" stroke="#555" stroke-width="0.5"/><rect x="49.6" y="49.6" width="32.2" height="21.2" fill="#000"/><rect x="70.8" y="34.4" width="2.4" height="35.6" fill="#8a8a8a" stroke="#111" stroke-width="0.6"/><rect x="75" y="34.4" width="2.8" height="35.6" fill="#808080" stroke="#111" stroke-width="0.6"/><rect x="115" y="38.6" width="32.8" height="23.2" fill="#fff" stroke="#555" stroke-width="0.5"/><rect x="115.2" y="40" width="32.4" height="21" fill="#000"/><rect x="126.4" y="25.4" width="1.1" height="36" fill="#000"/><rect x="135.8" y="64.2" width="12" height="4.6" fill="#000"/><rect x="50" y="128.4" width="28.2" height="18" fill="#1a0000"/><path d="M51.5 130h25" stroke="#a00808" stroke-width="1" stroke-dasharray="1.4 1.4"/><path d="M51.5 132.4h25" stroke="#a00808" stroke-width="1" stroke-dasharray="1.4 1.4"/><path d="M51.5 134.8h25" stroke="#a00808" stroke-width="1" stroke-dasharray="1.4 1.4"/><path d="M51.5 137.2h25" stroke="#a00808" stroke-width="1" stroke-dasharray="1.4 1.4"/><path d="M51.5 139.6h25" stroke="#a00808" stroke-width="1" stroke-dasharray="1.4 1.4"/><path d="M51.5 142h25" stroke="#a00808" stroke-width="1" stroke-dasharray="1.4 1.4"/><path d="M51.5 144.4h25" stroke="#a00808" stroke-width="1" stroke-dasharray="1.4 1.4"/><rect x="49.3" y="145.6" width="32.7" height="22.4" fill="#fff" stroke="#555" stroke-width="0.5"/><rect x="49.6" y="146.3" width="32.2" height="20.6" fill="#000"/><rect x="115" y="136" width="32.8" height="23" fill="#fff" stroke="#555" stroke-width="0.5"/><rect x="115.2" y="136.8" width="32.4" height="21.2" fill="#000"/><rect x="83" y="17.3" width="30.4" height="173.7" fill="#FBF8E6" stroke="#333" stroke-width="0.7"/></svg>
<span style="left:381.5px;top:344.5px;font-size:4.6px;line-height:6px;color:#000;font-weight:bold">HSS: 3122_LW</span>
<span style="left:378.5px;top:351.6px;font-size:4.2px;line-height:6px;color:#000;font-weight:bold">IP: 172.20.200.162</span>
<span style="left:375.5px;top:359.2px;font-size:4.3px;line-height:6px;color:#000;font-weight:bold">Station Name: HF_44</span>
<div style="left:232.3px;top:405.4px;width:351.7px;height:12.6px;background:#0A246A"></div>
<span style="left:236px;top:407.5px;font-size:7.72px;line-height:10px;color:#fff;;transform:scaleY(1.08);transform-origin:0 55%">Open Object List</span>
<svg style="left:563px;top:407.4px" width="6" height="9" viewBox="0 0 6 9"><rect x="1.4" y="0.6" width="3" height="4.4" fill="none" stroke="#fff" stroke-width="0.9"/><rect x="3.2" y="0.6" width="1.2" height="4.4" fill="#fff"/><path d="M0.3 5.2h5.2M2.9 5.2v3.2" stroke="#fff" stroke-width="0.9"/></svg>
<svg style="left:572.8px;top:409px" width="6" height="6" viewBox="0 0 6 6"><path d="M0.5 0.5L5.5 5.5M5.5 0.5L0.5 5.5" stroke="#fff" stroke-width="0.9"/></svg>
<div style="left:1px;top:421.3px;width:228px;height:17.6px;background:#F6F3EE"></div>
<div style="left:586px;top:421.3px;width:256px;height:17.8px;background:#F6F3EE"></div>
<div style="left:232px;top:423px;width:352px;height:0.9px;background:#9a968e"></div>
<div style="left:232px;top:423.8px;width:352px;height:15.5px;background:#F6F3EE"></div>
<svg style="left:6.8px;top:423.5px" width="11.4" height="13" viewBox="0 0 11.4 13"><path d="M2 1v11M4.4 1v11M6.8 1v11M9.2 1v11" stroke="#666" stroke-width="0.6" stroke-dasharray="1 0.6"/><rect x="0.6" y="3" width="10" height="6.4" fill="#6e6e6e" stroke="#222" stroke-width="0.8"/></svg>
<span style="left:19.4px;top:424.7px;font-size:9.6px;line-height:10px;color:#585858;transform:scaleX(0.8);transform-origin:0 0">d</span>
<svg style="left:27px;top:423.5px" width="11.4" height="13" viewBox="0 0 11.4 13"><rect x="0.6" y="2.6" width="10" height="7" fill="#d0d0d0" stroke="#333" stroke-width="0.9"/><rect x="1" y="7.4" width="3" height="2" fill="#333"/><path d="M0.6 11.4h10" stroke="#333" stroke-width="0.9"/></svg>
<span style="left:39px;top:424.7px;font-size:9.6px;line-height:10px;color:#585858;transform:scaleX(0.8);transform-origin:0 0">d</span>
<svg style="left:46px;top:423.5px" width="11.6" height="13" viewBox="0 0 11.6 13"><circle cx="5.8" cy="6.5" r="3.4" fill="none" stroke="#222" stroke-width="1.3"/><path d="M5.8 0.8v11.4M0.2 6.5h11.2" stroke="#222" stroke-width="1.2"/><rect x="4.8" y="5.5" width="2" height="2" fill="#c8b400"/></svg>
<span style="left:58.6px;top:425.9px;font-size:8px;line-height:10px;color:#606060;transform:scale(0.85,1.08);transform-origin:0 55%">F</span>
<div style="left:63.4px;top:425px;width:0.8px;height:10.5px;background:#9a968e"></div>
<svg style="left:66px;top:423.5px" width="11.6" height="13" viewBox="0 0 11.6 13"><path d="M0.5 1.6h8M3 0.4v3M6 0.4v3" stroke="#b0a020" stroke-width="0.9"/><path d="M2 4.6h7.5" stroke="#333" stroke-width="1.4"/><path d="M3 6l6 0.4l2 5l-6.4 0.4z" fill="#e8e040" stroke="#777" stroke-width="0.5"/><path d="M1.8 5.4q-1 3 1.6 5.6" stroke="#333" stroke-width="1.1" fill="none"/></svg>
<span style="left:78.8px;top:425.9px;font-size:8px;line-height:10px;color:#606060;transform:scale(0.85,1.08);transform-origin:0 55%">P</span>
<div style="left:83.6px;top:425px;width:0.8px;height:10.5px;background:#9a968e"></div>
<svg style="left:86.4px;top:423.5px" width="11.6" height="13" viewBox="0 0 11.6 13"><path d="M0.6 3.4h10.4" stroke="#222" stroke-width="1.6"/><path d="M1.6 4v7M3.6 4v5" stroke="#222" stroke-width="1.2"/><rect x="5" y="4.4" width="5.4" height="4" fill="#666"/><path d="M9.6 5v6" stroke="#222" stroke-width="1"/></svg>
<span style="left:98.2px;top:425.9px;font-size:8px;line-height:10px;color:#606060;transform:scale(0.85,1.08);transform-origin:0 55%">T</span>
<div style="left:103.6px;top:421.3px;width:18.8px;height:17.8px;background:#D4D0C8;box-shadow:inset 0 -1px 0 #404040,inset -1px 0 0 #808080"></div>
<svg style="left:104.8px;top:423.6px" width="12.5" height="12" viewBox="0 0 12.5 12"><rect x="2.6" y="0.6" width="3" height="2.6" fill="#20d8e8" stroke="#000" stroke-width="0.6"/><rect x="7.4" y="1.4" width="3" height="2.6" fill="#20d8e8" stroke="#000" stroke-width="0.6"/><path d="M4 3.2V5.5M9 4V5.5" stroke="#000" stroke-width="0.7"/><rect x="0.8" y="5.5" width="11" height="5.8" fill="#fff" stroke="#000" stroke-width="1"/><path d="M2.9 6v5M5 6v5M7.1 6v5M9.2 6v5" stroke="#000" stroke-width="0.9"/><path d="M1 7.6h10.6" stroke="#000" stroke-width="0.5"/></svg>
<span style="left:117.4px;top:426.1px;font-size:8px;line-height:10px;color:#000;transform:scale(0.85,1.08);transform-origin:0 55%">S</span>
<svg style="left:125px;top:423.5px" width="11.8" height="13" viewBox="0 0 11.8 13"><rect x="3" y="1.6" width="8" height="8.6" fill="#109020"/><path d="M0.6 2.4h4M0.6 4.4h4M0.6 6.4h4" stroke="#000" stroke-width="1.2"/><path d="M4.5 7l3-1.6v1h3.4v1.6h-3.4v1z" fill="#f0e020" stroke="#555" stroke-width="0.3"/></svg>
<span style="left:137px;top:425.9px;font-size:8px;line-height:10px;color:#606060;transform:scale(0.85,1.08);transform-origin:0 55%">R</span>
<div style="left:142.4px;top:425px;width:0.8px;height:10.5px;background:#9a968e"></div>
<svg style="left:147.6px;top:423.5px" width="8" height="13" viewBox="0 0 8 13"><rect x="1.4" y="1" width="5" height="11" rx="0.8" fill="#5a5a5a" stroke="#222" stroke-width="0.6"/><circle cx="3.9" cy="3.4" r="1.2" fill="#d02020"/><circle cx="3.9" cy="6.4" r="1.2" fill="#d8c000"/><circle cx="3.9" cy="9.4" r="1.2" fill="#20c820"/></svg>
<span style="left:156.8px;top:425.9px;font-size:8px;line-height:10px;color:#606060;transform:scale(0.85,1.08);transform-origin:0 55%">J</span>
<div style="left:160.6px;top:425px;width:0.8px;height:10.5px;background:#9a968e"></div>
<svg style="left:164.4px;top:423.5px" width="12.6" height="13" viewBox="0 0 12.6 13"><rect x="4" y="6" width="6" height="4.4" fill="#ddd" stroke="#222" stroke-width="0.8"/><rect x="6" y="3" width="3" height="2.4" fill="#20d8e8" stroke="#222" stroke-width="0.5"/><circle cx="6.3" cy="6.5" r="5.4" fill="none" stroke="#e00000" stroke-width="1.3"/><path d="M2.6 2.6L10 10.4" stroke="#e00000" stroke-width="1.3"/></svg>
<span style="left:178px;top:425.9px;font-size:8px;line-height:10px;color:#606060;transform:scale(0.85,1.08);transform-origin:0 55%">R</span>
<div style="left:183px;top:425px;width:0.8px;height:10.5px;background:#9a968e"></div>
<svg style="left:185.8px;top:423.5px" width="11" height="13" viewBox="0 0 11 13"><rect x="1.6" y="0.8" width="8" height="11.4" fill="#fff" stroke="#1030c0" stroke-width="1.2"/><path d="M2.6 4h6M2.6 6.6h6M2.6 9.2h6" stroke="#1030c0" stroke-width="1.1"/><rect x="0.4" y="5.4" width="2.4" height="4" fill="#555"/></svg>
<span style="left:197.4px;top:425.9px;font-size:8px;line-height:10px;color:#606060;transform:scale(0.85,1.08);transform-origin:0 55%">F</span>
<div style="left:202px;top:425px;width:0.8px;height:10.5px;background:#9a968e"></div>
<svg style="left:204.8px;top:423.5px" width="11.4" height="13" viewBox="0 0 11.4 13"><rect x="0.6" y="1" width="10.4" height="9.4" fill="#0c7a18" stroke="#033" stroke-width="0.6"/><rect x="2" y="2.6" width="3.4" height="3" fill="#222"/><rect x="6.4" y="4" width="3" height="4" fill="#7ad07a"/><path d="M2 11v1.6M4.4 11v1.6M6.8 11v1.6M9 11v1.6" stroke="#222" stroke-width="0.8"/></svg>
<span style="left:217.4px;top:425.9px;font-size:8px;line-height:10px;color:#606060;transform:scale(0.85,1.08);transform-origin:0 55%">B</span>
<div style="left:223px;top:425px;width:0.8px;height:10.5px;background:#9a968e"></div>
<svg style="left:241px;top:423.5px" width="6" height="13" viewBox="0 0 6 13"><rect x="0.6" y="1.6" width="4.6" height="11" rx="0.8" fill="#5a5a5a" stroke="#222" stroke-width="0.6"/><circle cx="2.9" cy="3.2" r="1.1" fill="#d02020"/><circle cx="2.9" cy="6.2" r="1.1" fill="#d8c000"/><circle cx="2.9" cy="9.2" r="1.1" fill="#40e040"/></svg>
<span style="left:251.6px;top:427.1px;font-size:7.55px;line-height:10px;color:#858585;;transform:scale(1.006,1.08);transform-origin:0 55%">HF_44_LBO\SWT_LBO_Nutz_0603_SO14</span>
<div style="left:408px;top:423px;width:118.8px;height:16.2px;background:#D4D0C8;box-shadow:inset -1px -1px 0 #404040"></div>
<svg style="left:408.8px;top:424.6px" width="12.5" height="12" viewBox="0 0 12.5 12"><rect x="2.6" y="0.6" width="3" height="2.6" fill="#20d8e8" stroke="#000" stroke-width="0.6"/><rect x="7.4" y="1.4" width="3" height="2.6" fill="#20d8e8" stroke="#000" stroke-width="0.6"/><path d="M4 3.2V5.5M9 4V5.5" stroke="#000" stroke-width="0.7"/><rect x="0.8" y="5.5" width="11" height="5.8" fill="#fff" stroke="#000" stroke-width="1"/><path d="M2.9 6v5M5 6v5M7.1 6v5M9.2 6v5" stroke="#000" stroke-width="0.9"/><path d="M1 7.6h10.6" stroke="#000" stroke-width="0.5"/></svg>
<span style="left:423.4px;top:426.9px;font-size:7.5px;line-height:10px;color:#000;;transform:scale(1.001,1.08);transform-origin:0 55%">HF_44_LBO\LBO_Ruest_01</span>
<svg style="left:563px;top:426.6px" width="16" height="8" viewBox="0 0 16 8"><path d="M5.6 0.6v6.4l-4-3.2z" fill="#808080"/><path d="M10.6 0.8v6l3.8-3z" fill="none" stroke="#909090" stroke-width="0.8"/></svg>
<svg style="left:594.2px;top:423.5px" width="9.4" height="13" viewBox="0 0 9.4 13"><rect x="1" y="0.8" width="7" height="11.4" fill="#f4f4f4" stroke="#333" stroke-width="0.9"/><path d="M2.6 3.2h4M2.6 5.4h4M2.6 7.6h4M2.6 9.8h4" stroke="#555" stroke-width="0.8"/></svg>
<span style="left:606.8px;top:426.3px;font-size:7.5px;line-height:10px;color:#707070;;transform:scaleY(1.08);transform-origin:0 55%">Fee···</span>
<div style="left:631.2px;top:425px;width:0.8px;height:10.5px;background:#9a968e"></div>
<svg style="left:633.6px;top:423.5px" width="12.6" height="13" viewBox="0 0 12.6 13"><rect x="0.4" y="0.4" width="11.6" height="12" fill="#0a7a14"/><path d="M6.2 0.4v12M0.4 6.4h11.6" stroke="#fff" stroke-width="1"/><path d="M2 2.2h2.4v2.6h-2.4zM8 2.2h2.4M8 8.4h2.4M2 8.4h2.4v2.4" stroke="#c8f0c8" stroke-width="0.8" fill="none"/></svg>
<span style="left:650px;top:426.3px;font-size:7.5px;line-height:10px;color:#707070;;transform:scaleY(1.08);transform-origin:0 55%">Tra···</span>
<div style="left:673.6px;top:425px;width:0.8px;height:10.5px;background:#9a968e"></div>
<svg style="left:676.2px;top:423.5px" width="12" height="13" viewBox="0 0 12 13"><rect x="5" y="0.8" width="2.8" height="2.4" fill="#20d8e8" stroke="#222" stroke-width="0.5"/><path d="M6.4 3.2v2" stroke="#222" stroke-width="0.7"/><rect x="1.4" y="5" width="9" height="5.6" rx="1" fill="#fff" stroke="#222" stroke-width="1"/><path d="M0.6 8h1.6M9.8 8h1.6M3 10.6v1.6M9 10.6v1.6M4 7.6h3.6" stroke="#222" stroke-width="0.8"/></svg>
<span style="left:690.4px;top:426.3px;font-size:7.5px;line-height:10px;color:#707070;;transform:scaleY(1.08);transform-origin:0 55%">Stat···</span>
<div style="left:716.3px;top:421.3px;width:41px;height:17.8px;background:#D4D0C8;box-shadow:inset 0 -1px 0 #404040,inset -1px 0 0 #808080,inset 1px 0 0 #fff"></div>
<svg style="left:717.8px;top:423.3px" width="13.4" height="13" viewBox="0 0 13.4 13"><rect x="2" y="0.6" width="3" height="2.6" fill="#20d8e8" stroke="#000" stroke-width="0.6"/><rect x="7" y="2" width="3.4" height="2.8" fill="#20d8e8" stroke="#000" stroke-width="0.6"/><path d="M3.4 3.2V6M8.8 4.8V6.4" stroke="#000" stroke-width="0.7"/><rect x="1" y="4.6" width="5" height="3" fill="#eee" stroke="#000" stroke-width="0.8"/><rect x="3.6" y="6.8" width="9" height="5.2" rx="0.8" fill="#f4f4f4" stroke="#000" stroke-width="1"/><path d="M6 9.6h4" stroke="#000" stroke-width="0.8"/></svg>
<span style="left:734.6px;top:426.3px;font-size:7.5px;line-height:10px;color:#000;;transform:scaleY(1.08);transform-origin:0 55%">Lin···</span>
<svg style="left:759.8px;top:423.5px" width="11" height="13" viewBox="0 0 11 13"><rect x="3.6" y="0.4" width="3.6" height="3" fill="#1020d0"/><path d="M1 3.6h9l-1 3h-7z" fill="#eee" stroke="#222" stroke-width="0.8"/><path d="M3.4 6.6h4.2v3l-1 2.6h-2.2l-1-2.6z" fill="#ddd" stroke="#222" stroke-width="0.8"/><path d="M0.6 4.6l1.4 2M10.4 4.6l-1.4 2" stroke="#222" stroke-width="0.8"/></svg>
<span style="left:775px;top:426.3px;font-size:7.5px;line-height:10px;color:#707070;;transform:scaleY(1.08);transform-origin:0 55%">Noz···</span>
<div style="left:799px;top:425px;width:0.8px;height:10.5px;background:#9a968e"></div>
<svg style="left:801.8px;top:423.5px" width="12" height="13" viewBox="0 0 12 13"><rect x="0.8" y="1.6" width="10" height="7.6" fill="#6a6a6a" stroke="#222" stroke-width="0.8"/><rect x="2.4" y="3" width="6.8" height="4.4" fill="#c8c8d0" stroke="#000" stroke-width="0.6"/><path d="M1 10.4h9.6" stroke="#888" stroke-width="0.8"/></svg>
<span style="left:818.8px;top:426.3px;font-size:7.5px;line-height:10px;color:#707070;;transform:scaleY(1.08);transform-origin:0 55%">Co···</span>
<div style="left:841px;top:425px;width:0.8px;height:10.5px;background:#9a968e"></div>
<div style="left:6.5px;top:451px;width:134.6px;height:158px;background:#fff;box-shadow:inset 1.4px 1.4px 0 #505050,inset -1px -1px 0 #fff"></div>
<div style="left:14px;top:463px;width:1px;height:3px;background:repeating-linear-gradient(180deg,#a8a8a8 0 1px,transparent 1px 2px)"></div>
<svg style="left:10.7px;top:456.5px" width="6.6" height="6.6" viewBox="0 0 6.6 6.6"><rect x="0.5" y="0.5" width="5.6" height="5.6" fill="#fff" stroke="#9a9a9a" stroke-width="0.9"/><path d="M1.7 3.3h3.2" stroke="#000" stroke-width="0.9"/></svg>
<div style="left:18px;top:459px;width:4px;height:1px;background:repeating-linear-gradient(90deg,#a8a8a8 0 1px,transparent 1px 2px)"></div>
<svg style="left:21.6px;top:453.2px" width="12.5" height="12" viewBox="0 0 12.5 12"><rect x="2.6" y="0.6" width="3" height="2.6" fill="#20d8e8" stroke="#000" stroke-width="0.6"/><rect x="7.4" y="1.4" width="3" height="2.6" fill="#20d8e8" stroke="#000" stroke-width="0.6"/><path d="M4 3.2V5.5M9 4V5.5" stroke="#000" stroke-width="0.7"/><rect x="0.8" y="5.5" width="11" height="5.8" fill="#fff" stroke="#000" stroke-width="1"/><path d="M2.9 6v5M5 6v5M7.1 6v5M9.2 6v5" stroke="#000" stroke-width="0.9"/><path d="M1 7.6h10.6" stroke="#000" stroke-width="0.5"/></svg>
<span style="left:37.8px;top:454.5px;font-size:7.5px;line-height:10px;color:#000;;transform:scale(0.965,1.08);transform-origin:0 55%">LBO_Ruest_01</span>
<div style="left:27px;top:466px;width:1px;height:4px;background:repeating-linear-gradient(180deg,#a8a8a8 0 1px,transparent 1px 2px)"></div>
<svg style="left:24.1px;top:470.3px" width="6.6" height="6.6" viewBox="0 0 6.6 6.6"><rect x="0.5" y="0.5" width="5.6" height="5.6" fill="#fff" stroke="#6a6a6a" stroke-width="0.9"/><path d="M1.7 3.3h3.2" stroke="#000" stroke-width="0.9"/></svg>
<div style="left:31px;top:473px;width:7px;height:1px;background:repeating-linear-gradient(90deg,#a8a8a8 0 1px,transparent 1px 2px)"></div>
<svg style="left:37.6px;top:466.3px" width="10" height="13" viewBox="0 0 10 13"><rect x="4.4" y="0.8" width="3" height="2.6" fill="#20d8e8" stroke="#222" stroke-width="0.5"/><path d="M5.9 3.4v2.2" stroke="#222" stroke-width="0.7"/><rect x="1.4" y="5.4" width="7.6" height="5.4" rx="1" fill="#fff" stroke="#222" stroke-width="0.9"/><path d="M0.2 8.4h1.6M8.6 8.4h1.4M2.6 10.8v1.4M7.6 10.8v1.4M3.4 8h3" stroke="#222" stroke-width="0.8"/></svg>
<div style="left:49.5px;top:466.2px;width:25.6px;height:13.2px;background:#0A246A;outline:0.7px dotted #e8d890;outline-offset:-0.7px"></div>
<span style="left:51.4px;top:468.5px;font-size:7.8px;line-height:10px;color:#fff;;transform:scale(0.940,1.08);transform-origin:0 55%">HF_44</span>
<div style="left:41px;top:480px;width:1px;height:48px;background:repeating-linear-gradient(180deg,#a8a8a8 0 1px,transparent 1px 2px)"></div>
<div style="left:41px;top:486px;width:8px;height:1px;background:repeating-linear-gradient(90deg,#a8a8a8 0 1px,transparent 1px 2px)"></div>
<svg style="left:49.4px;top:479.9px" width="12.4" height="13" viewBox="0 0 12.4 13"><path d="M0.6 0.8h11.2v11.6h-3v-3.6h-5.2v3.6h-3z" fill="#8a8424" stroke="#5a5610" stroke-width="0.5"/><rect x="3.2" y="1" width="6" height="5.4" fill="#fff" stroke="#111" stroke-width="1"/><rect x="6" y="6" width="2.8" height="1.9" fill="#1030e0"/></svg>
<span style="left:65.8px;top:482px;font-size:7.5px;line-height:10px;color:#000;;transform:scale(0.953,1.08);transform-origin:0 55%">Location1</span>
<div style="left:41px;top:500px;width:8px;height:1px;background:repeating-linear-gradient(90deg,#a8a8a8 0 1px,transparent 1px 2px)"></div>
<svg style="left:49.4px;top:493.7px" width="12.4" height="13" viewBox="0 0 12.4 13"><path d="M0.6 0.8h11.2v11.6h-3v-3.6h-5.2v3.6h-3z" fill="#8a8424" stroke="#5a5610" stroke-width="0.5"/><rect x="3.2" y="1" width="6" height="5.4" fill="#fff" stroke="#111" stroke-width="1"/><rect x="6" y="6" width="2.8" height="1.9" fill="#1030e0"/></svg>
<span style="left:65.8px;top:495.8px;font-size:7.5px;line-height:10px;color:#000;;transform:scale(0.953,1.08);transform-origin:0 55%">Location2</span>
<div style="left:41px;top:514px;width:8px;height:1px;background:repeating-linear-gradient(90deg,#a8a8a8 0 1px,transparent 1px 2px)"></div>
<svg style="left:49.4px;top:507.3px" width="12.4" height="13" viewBox="0 0 12.4 13"><path d="M0.6 0.8h11.2v11.6h-3v-3.6h-5.2v3.6h-3z" fill="#8a8424" stroke="#5a5610" stroke-width="0.5"/><rect x="3.2" y="1" width="6" height="5.4" fill="#fff" stroke="#111" stroke-width="1"/><rect x="6" y="6" width="2.8" height="1.9" fill="#1030e0"/></svg>
<span style="left:65.8px;top:509.4px;font-size:7.5px;line-height:10px;color:#000;;transform:scale(0.953,1.08);transform-origin:0 55%">Location3</span>
<div style="left:41px;top:528px;width:8px;height:1px;background:repeating-linear-gradient(90deg,#a8a8a8 0 1px,transparent 1px 2px)"></div>
<svg style="left:49.4px;top:521.1px" width="12.4" height="13" viewBox="0 0 12.4 13"><path d="M0.6 0.8h11.2v11.6h-3v-3.6h-5.2v3.6h-3z" fill="#8a8424" stroke="#5a5610" stroke-width="0.5"/><rect x="3.2" y="1" width="6" height="5.4" fill="#fff" stroke="#111" stroke-width="1"/><rect x="6" y="6" width="2.8" height="1.9" fill="#1030e0"/></svg>
<span style="left:65.8px;top:523.2px;font-size:7.5px;line-height:10px;color:#000;;transform:scale(0.953,1.08);transform-origin:0 55%">Location4</span>
<div style="left:148px;top:466px;width:689.6px;height:143.2px;background:#D4D0C8;box-shadow:inset 1px 1px 0 #fff,inset -1px -1px 0 #404040,inset -2px -2px 0 #808080"></div>
<div style="left:148px;top:451.7px;width:33.6px;height:15.3px;background:#D4D0C8;box-shadow:inset 1px 1px 0 #fff,inset -1px 0 0 #404040,inset -2px 0 0 #808080;border-radius:1.5px 1.5px 0 0"></div>
<div style="left:149px;top:465.5px;width:30.6px;height:2px;background:#D4D0C8"></div>
<span style="left:153.4px;top:455.3px;font-size:7.5px;line-height:10px;color:#000;;transform:scale(0.973,1.08);transform-origin:0 55%">HF_44</span>
<div style="left:151.3px;top:473px;width:122px;height:133.3px;box-sizing:border-box;border:1px solid #8a8782;box-shadow:0.8px 0.8px 0 #fff,inset 0.8px 0.8px 0 #fff"></div>
<div style="left:155px;top:469.6px;width:48.4px;height:8px;background:#D4D0C8"></div>
<span style="left:156.6px;top:470.3px;font-size:7.75px;line-height:10px;color:#000;;transform:scale(0.976,1.08);transform-origin:0 55%"><u>S</u>tation Setup</span>
<span style="left:158px;top:497.1px;font-size:7.75px;line-height:10px;color:#000;;transform:scale(0.927,1.08);transform-origin:0 55%">Vision system</span>
<div style="left:161.7px;top:510.4px;width:99.5px;height:17.2px;background:#D4D0C8;box-shadow:inset 1px 1px 0 #606060,inset 1.8px 1.8px 0 #505050,inset -1px -1px 0 #fff"></div>
<div style="left:249px;top:512.2px;width:10.8px;height:14px;background:#D4D0C8;box-shadow:inset 1px 1px 0 #fff,inset -1px -1px 0 #404040,inset -2px -2px 0 #909090;"></div>
<svg style="left:249px;top:512.2px" width="10.8" height="14" viewBox="0 0 10.8 14"><path d="M2.8 5.8h5l-2.5 2.7z" fill="#8a8782"/></svg>
<span style="left:165.7px;top:515.7px;font-size:7.6px;line-height:10px;color:#8a8782;text-shadow:0.7px 0.7px 0 #fff;transform:scale(0.934,1.08);transform-origin:0 55%">MVS 340</span>
<span style="left:157.6px;top:533.3px;font-size:7.75px;line-height:10px;color:#000;;transform:scale(0.910,1.08);transform-origin:0 55%">PCB camera</span>
<div style="left:162px;top:547.1px;width:99.4px;height:16.6px;background:#fff;box-shadow:inset 1px 1px 0 #606060,inset 1.8px 1.8px 0 #505050,inset -1px -1px 0 #fff"></div>
<div style="left:249.2px;top:548.9px;width:10.8px;height:13.4px;background:#D4D0C8;box-shadow:inset 1px 1px 0 #fff,inset -1px -1px 0 #404040,inset -2px -2px 0 #909090;"></div>
<svg style="left:249.2px;top:548.9px" width="10.8" height="13.4" viewBox="0 0 10.8 13.4"><path d="M2.8 5.5h5l-2.5 2.7z" fill="#000"/></svg>
<span style="left:166px;top:552.1px;font-size:7.6px;line-height:10px;color:#000;;transform:scale(0.932,1.08);transform-origin:0 55%">PCB Cam 5</span>
<span style="left:157.6px;top:569.3px;font-size:7.75px;line-height:10px;color:#000;;transform:scale(1.001,1.08);transform-origin:0 55%">Component Barcode reader</span>
<div style="left:162px;top:583.3px;width:99.4px;height:16.8px;background:#D4D0C8;box-shadow:inset 1px 1px 0 #606060,inset 1.8px 1.8px 0 #505050,inset -1px -1px 0 #fff"></div>
<div style="left:249.2px;top:585.1px;width:10.8px;height:13.6px;background:#D4D0C8;box-shadow:inset 1px 1px 0 #fff,inset -1px -1px 0 #404040,inset -2px -2px 0 #909090;"></div>
<svg style="left:249.2px;top:585.1px" width="10.8" height="13.6" viewBox="0 0 10.8 13.6"><path d="M2.8 5.6h5l-2.5 2.7z" fill="#8a8782"/></svg>
<span style="left:166px;top:588.4px;font-size:7.6px;line-height:10px;color:#8a8782;text-shadow:0.7px 0.7px 0 #fff;transform:scale(0.969,1.08);transform-origin:0 55%">(None)</span>
<div style="left:280.4px;top:473px;width:286.2px;height:30px;box-sizing:border-box;border:1px solid #8a8782;box-shadow:0.8px 0.8px 0 #fff,inset 0.8px 0.8px 0 #fff"></div>
<div style="left:285px;top:469.6px;width:55.2px;height:8px;background:#D4D0C8"></div>
<span style="left:286.6px;top:470.3px;font-size:7.75px;line-height:10px;color:#000;;transform:scale(1.045,1.08);transform-origin:0 55%"><u>P</u>roductivity lift</span>
<span style="left:286.8px;top:484.5px;font-size:7.75px;line-height:10px;color:#000;;transform:scale(0.947,1.08);transform-origin:0 55%">This machine is:</span>
<div style="left:349.8px;top:484.2px;width:9.6px;height:9.6px;background:#D4D0C8;box-shadow:inset 1px 1px 0 #606060,inset 1.8px 1.8px 0 #707070,inset -1px -1px 0 #fff"></div>
<svg style="left:349.8px;top:484.2px" width="9.6" height="9.6" viewBox="0 0 9.6 9.6"><path d="M2.6 4.6L4.2 6.4L7.2 3" stroke="#8a8782" stroke-width="1.5" fill="none"/></svg>
<span style="left:363.6px;top:484.9px;font-size:7.75px;line-height:10px;color:#8a8782;text-shadow:0.7px 0.7px 0 #fff;transform:scale(1.019,1.08);transform-origin:0 55%">At the end of a cluster OR not in a cluster</span>
<div style="left:280.4px;top:515.5px;width:139px;height:90.9px;box-sizing:border-box;border:1px solid #8a8782;box-shadow:0.8px 0.8px 0 #fff,inset 0.8px 0.8px 0 #fff"></div>
<div style="left:285px;top:512.1px;width:110.9px;height:8px;background:#D4D0C8"></div>
<span style="left:286.6px;top:512.8px;font-size:7.75px;line-height:10px;color:#000;;transform:scale(0.998,1.08);transform-origin:0 55%">Long Board - Placement Area <u>1</u></span>
<span style="left:286.8px;top:533.3px;font-size:7.75px;line-height:10px;color:#000;;transform:scale(1.003,1.08);transform-origin:0 55%">Stopper 1 at position</span>
<div style="left:380px;top:529px;width:34.8px;height:15.2px;background:#D4D0C8;box-shadow:inset 1px 1px 0 #606060,inset 1.8px 1.8px 0 #707070,inset -1px -1px 0 #fff"></div>
<span style="left:383.4px;top:533.3px;font-size:7.6px;line-height:10px;color:#8a8782;text-shadow:0.7px 0.7px 0 #fff;transform:scale(0.973,1.08);transform-origin:0 55%">0.000</span>
<div style="left:297.4px;top:550.8px;width:9.6px;height:9.6px;background:#D4D0C8;box-shadow:inset 1px 1px 0 #606060,inset 1.8px 1.8px 0 #707070,inset -1px -1px 0 #fff"></div>
<svg style="left:297.4px;top:550.8px" width="9.6" height="9.6" viewBox="0 0 9.6 9.6"><path d="M2.6 4.6L4.2 6.4L7.2 3" stroke="#8a8782" stroke-width="1.5" fill="none"/></svg>
<span style="left:310.6px;top:551.5px;font-size:7.75px;line-height:10px;color:#8a8782;text-shadow:0.7px 0.7px 0 #fff;transform:scale(0.993,1.08);transform-origin:0 55%">Use for optimization</span>
<div style="left:286.2px;top:569.4px;width:9.6px;height:9.6px;background:#fff;box-shadow:inset 1px 1px 0 #606060,inset 1.8px 1.8px 0 #707070,inset -1px -1px 0 #fff"></div>
<svg style="left:286.2px;top:569.4px" width="9.6" height="9.6" viewBox="0 0 9.6 9.6"><path d="M2.6 4.6L4.2 6.4L7.2 3" stroke="#000" stroke-width="1.5" fill="none"/></svg>
<span style="left:298.6px;top:569.9px;font-size:7.75px;line-height:10px;color:#000;;transform:scale(0.999,1.08);transform-origin:0 55%">Stopper 2 at position</span>
<div style="left:380px;top:565.6px;width:34.8px;height:15.4px;background:#fff;box-shadow:inset 1px 1px 0 #606060,inset 1.8px 1.8px 0 #707070,inset -1px -1px 0 #fff"></div>
<span style="left:383.4px;top:570px;font-size:7.6px;line-height:10px;color:#000;;transform:scale(0.961,1.08);transform-origin:0 55%">160.000</span>
<div style="left:298px;top:587.8px;width:9.6px;height:9.6px;background:#fff;box-shadow:inset 1px 1px 0 #606060,inset 1.8px 1.8px 0 #707070,inset -1px -1px 0 #fff"></div>
<svg style="left:298px;top:587.8px" width="9.6" height="9.6" viewBox="0 0 9.6 9.6"><path d="M2.6 4.6L4.2 6.4L7.2 3" stroke="#000" stroke-width="1.5" fill="none"/></svg>
<span style="left:311px;top:588.5px;font-size:7.75px;line-height:10px;color:#000;;transform:scale(0.993,1.08);transform-origin:0 55%">Use for optimization</span>
<div style="left:427.4px;top:515.5px;width:139px;height:90.9px;box-sizing:border-box;border:1px solid #8a8782;box-shadow:0.8px 0.8px 0 #fff,inset 0.8px 0.8px 0 #fff"></div>
<div style="left:432px;top:512.1px;width:110.9px;height:8px;background:#D4D0C8"></div>
<span style="left:433.6px;top:512.8px;font-size:7.75px;line-height:10px;color:#000;;transform:scale(0.998,1.08);transform-origin:0 55%">Long Board - Placement Area <u>2</u></span>
<span style="left:433.8px;top:533.3px;font-size:7.75px;line-height:10px;color:#000;;transform:scale(1.003,1.08);transform-origin:0 55%">Stopper 1 at position</span>
<div style="left:527px;top:529px;width:34.8px;height:15.2px;background:#D4D0C8;box-shadow:inset 1px 1px 0 #606060,inset 1.8px 1.8px 0 #707070,inset -1px -1px 0 #fff"></div>
<span style="left:530.4px;top:533.3px;font-size:7.6px;line-height:10px;color:#8a8782;text-shadow:0.7px 0.7px 0 #fff;transform:scale(0.973,1.08);transform-origin:0 55%">0.000</span>
<div style="left:444.4px;top:550.8px;width:9.6px;height:9.6px;background:#D4D0C8;box-shadow:inset 1px 1px 0 #606060,inset 1.8px 1.8px 0 #707070,inset -1px -1px 0 #fff"></div>
<svg style="left:444.4px;top:550.8px" width="9.6" height="9.6" viewBox="0 0 9.6 9.6"><path d="M2.6 4.6L4.2 6.4L7.2 3" stroke="#8a8782" stroke-width="1.5" fill="none"/></svg>
<span style="left:457.6px;top:551.5px;font-size:7.75px;line-height:10px;color:#8a8782;text-shadow:0.7px 0.7px 0 #fff;transform:scale(0.993,1.08);transform-origin:0 55%">Use for optimization</span>
<div style="left:433.2px;top:569.4px;width:9.6px;height:9.6px;background:#fff;box-shadow:inset 1px 1px 0 #606060,inset 1.8px 1.8px 0 #707070,inset -1px -1px 0 #fff"></div>
<svg style="left:433.2px;top:569.4px" width="9.6" height="9.6" viewBox="0 0 9.6 9.6"><path d="M2.6 4.6L4.2 6.4L7.2 3" stroke="#000" stroke-width="1.5" fill="none"/></svg>
<span style="left:445.6px;top:569.9px;font-size:7.75px;line-height:10px;color:#000;;transform:scale(0.999,1.08);transform-origin:0 55%">Stopper 2 at position</span>
<div style="left:527px;top:565.6px;width:34.8px;height:15.4px;background:#fff;box-shadow:inset 1px 1px 0 #606060,inset 1.8px 1.8px 0 #707070,inset -1px -1px 0 #fff"></div>
<span style="left:530.4px;top:570px;font-size:7.6px;line-height:10px;color:#000;;transform:scale(0.961,1.08);transform-origin:0 55%">160.000</span>
<div style="left:445px;top:587.8px;width:9.6px;height:9.6px;background:#fff;box-shadow:inset 1px 1px 0 #606060,inset 1.8px 1.8px 0 #707070,inset -1px -1px 0 #fff"></div>
<svg style="left:445px;top:587.8px" width="9.6" height="9.6" viewBox="0 0 9.6 9.6"><path d="M2.6 4.6L4.2 6.4L7.2 3" stroke="#000" stroke-width="1.5" fill="none"/></svg>
<span style="left:458px;top:588.5px;font-size:7.75px;line-height:10px;color:#000;;transform:scale(0.993,1.08);transform-origin:0 55%">Use for optimization</span>
<div style="left:574.4px;top:473px;width:116.2px;height:48.4px;box-sizing:border-box;border:1px solid #8a8782;box-shadow:0.8px 0.8px 0 #fff,inset 0.8px 0.8px 0 #fff"></div>
<div style="left:579px;top:469.6px;width:97.6px;height:8px;background:#D4D0C8"></div>
<span style="left:580.6px;top:470.3px;font-size:7.75px;line-height:10px;color:#000;;transform:scale(1.012,1.08);transform-origin:0 55%"><u>W</u>hisper down the machine</span>
<div style="left:585.8px;top:490px;width:9.6px;height:9.6px;background:#fff;box-shadow:inset 1px 1px 0 #606060,inset 1.8px 1.8px 0 #707070,inset -1px -1px 0 #fff"></div>
<span style="left:598.4px;top:490.7px;font-size:7.75px;line-height:10px;color:#000;;transform:scale(0.921,1.08);transform-origin:0 55%">Enabled</span>
<div style="left:574.4px;top:540px;width:116.2px;height:66.4px;box-sizing:border-box;border:1px solid #8a8782;box-shadow:0.8px 0.8px 0 #fff,inset 0.8px 0.8px 0 #fff"></div>
<div style="left:579px;top:536.6px;width:50.4px;height:8px;background:#D4D0C8"></div>
<span style="left:580.6px;top:537.3px;font-size:7.75px;line-height:10px;color:#000;;transform:scale(0.974,1.08);transform-origin:0 55%">P<u>C</u>B transport</span>
<div style="left:580px;top:565.5px;width:104.4px;height:16.4px;background:#fff;box-shadow:inset 1px 1px 0 #606060,inset 1.8px 1.8px 0 #505050,inset -1px -1px 0 #fff"></div>
<div style="left:672.2px;top:567.3px;width:10.8px;height:13.2px;background:#D4D0C8;box-shadow:inset 1px 1px 0 #fff,inset -1px -1px 0 #404040,inset -2px -2px 0 #909090;"></div>
<svg style="left:672.2px;top:567.3px" width="10.8" height="13.2" viewBox="0 0 10.8 13.2"><path d="M2.8 5.4h5l-2.5 2.7z" fill="#000"/></svg>
<span style="left:584px;top:570.4px;font-size:7.6px;line-height:10px;color:#000;;transform:scale(0.977,1.08);transform-origin:0 55%">Long Board</span>
<div style="left:1px;top:618.4px;width:845px;height:15.4px;background:#FBF4EF"></div>
<div style="left:1px;top:617.8px;width:845px;height:0.9px;background:#5a5854"></div>
<span style="left:7.8px;top:622.7px;font-size:7.6px;line-height:10px;color:#808080;;transform:scale(0.995,1.08);transform-origin:0 55%">Notifications</span>
<div style="left:56.2px;top:617.8px;width:105.6px;height:16px;background:#D4D0C8;box-shadow:inset -1px -1px 0 #404040"></div>
<span style="left:58.6px;top:622.7px;font-size:7.7px;line-height:10px;color:#000;;transform:scale(1.001,1.08);transform-origin:0 55%">HF_44_LBO\LBO_Ruest_01</span>
<svg style="left:480px;top:575px" width="70" height="95" viewBox="0 0 70 95"><path d="M58.3 7.7L30 37L37.6 41L10.5 91L16.4 94.3L43.6 44L50 47.4z" fill="#000"/></svg>
<div style="left:846px;top:0px;width:1px;height:635px;background:#000"></div>
</div></body></html>
